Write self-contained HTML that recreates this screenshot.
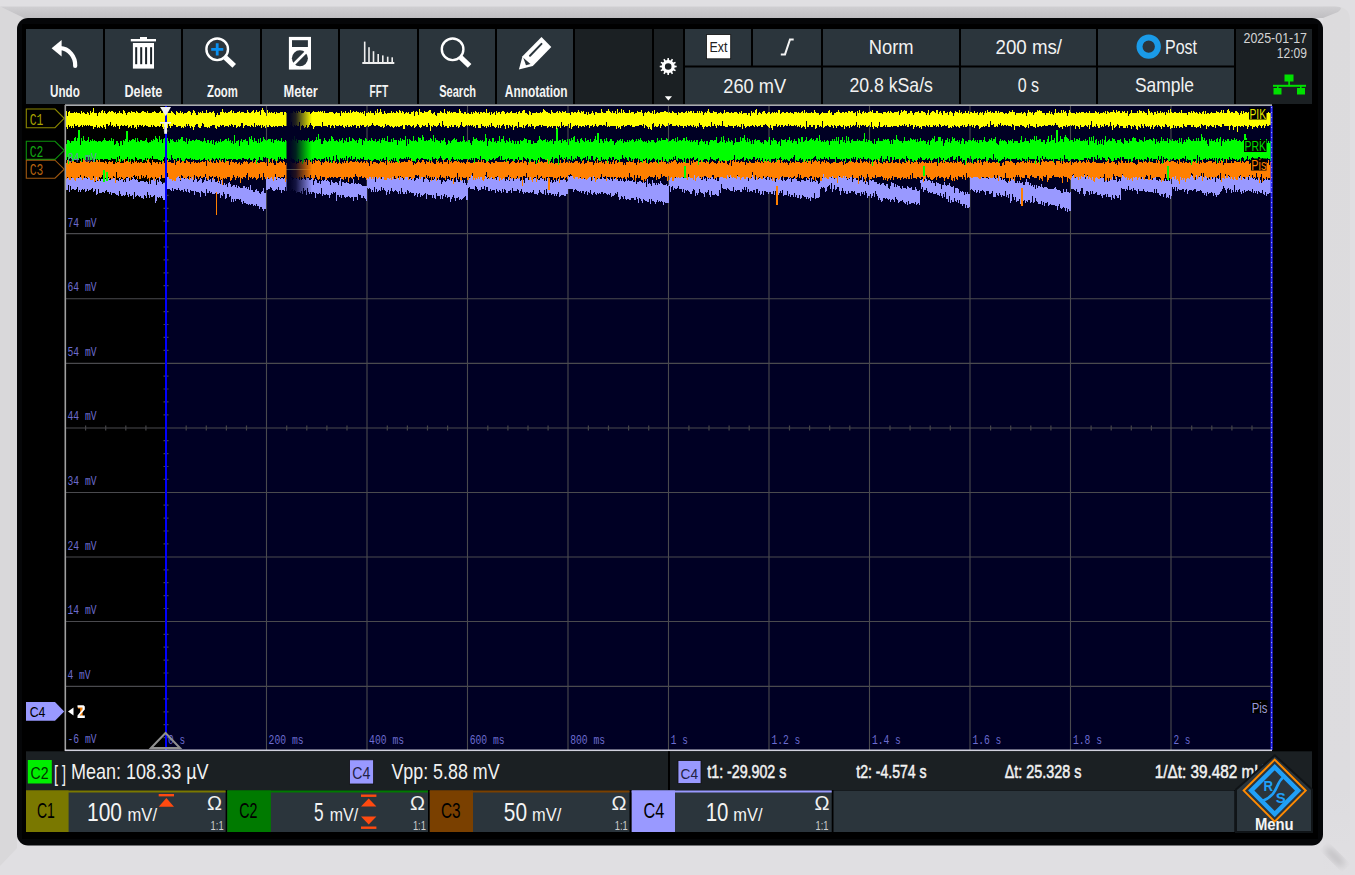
<!DOCTYPE html>
<html><head><meta charset="utf-8"><title>Oscilloscope</title>
<style>html,body{margin:0;padding:0;width:1355px;height:875px;overflow:hidden;background:#e2e1e3;font-family:"Liberation Sans",sans-serif}svg{display:block}</style>
</head><body>
<svg width="1355" height="875" viewBox="0 0 1355 875" >
<defs><linearGradient id="gTop" x1="0" y1="0" x2="0" y2="1"><stop offset="0" stop-color="#d0cfd2"/><stop offset="1" stop-color="#bfbec1"/></linearGradient><linearGradient id="gFade" x1="0" y1="0" x2="1" y2="0"><stop offset="0" stop-color="#000010" stop-opacity="1"/><stop offset="0.35" stop-color="#000010" stop-opacity="0.75"/><stop offset="1" stop-color="#000010" stop-opacity="0"/></linearGradient><radialGradient id="gBR" cx="0.5" cy="0.5" r="0.5"><stop offset="0" stop-color="#c4c3c5"/><stop offset="1" stop-color="#e2e1e3" stop-opacity="0"/></radialGradient></defs>
<rect x="0" y="0" width="1355" height="875" fill="#e0dfe2"/>
<path d="M0,6.5 L24,18 H30 V30 H17 V848 L0,866 Z" fill="#d9d8da"/>
<defs><linearGradient id="gR" x1="0" y1="0" x2="1" y2="0"><stop offset="0" stop-color="#d9d8da"/><stop offset="1" stop-color="#e2e1e3"/></linearGradient><filter id="blur3"><feGaussianBlur stdDeviation="3"/></filter></defs><linearGradient id="gRV" x1="0" y1="0" x2="0" y2="1"><stop offset="0" stop-color="#dcdbdd"/><stop offset="0.9" stop-color="#dddcdf"/><stop offset="1" stop-color="#e0dfe2"/></linearGradient><path d="M1323,6.5 H1335 Q1350,6.5 1350,20 V875 H1323 Z" fill="url(#gRV)"/>
<path d="M0,6.5 H1335 Q1345,6.5 1338,12 L1323,18 H24 Z" fill="url(#gTop)"/>
<ellipse cx="1335" cy="857" rx="13" ry="4.5" transform="rotate(45 1335 857)" fill="#c4c3c6" filter="url(#blur3)"/>
<rect x="17" y="18" width="1306" height="827.5" rx="11" fill="#050608"/>
<rect x="22" y="24" width="1296" height="815" fill="#000"/>
<rect x="26" y="29" width="77" height="75" fill="#2b353c"/>
<text x="50" y="96.8" font-size="16.3" fill="#f4f4f4" font-weight="bold" font-family='"Liberation Sans", sans-serif' text-anchor="start" textLength="29.8" lengthAdjust="spacingAndGlyphs" >Undo</text>
<rect x="105" y="29" width="76" height="75" fill="#2b353c"/>
<text x="124.5" y="96.8" font-size="16.3" fill="#f4f4f4" font-weight="bold" font-family='"Liberation Sans", sans-serif' text-anchor="start" textLength="37.9" lengthAdjust="spacingAndGlyphs" >Delete</text>
<rect x="183" y="29" width="77" height="75" fill="#2b353c"/>
<text x="207" y="96.8" font-size="16.3" fill="#f4f4f4" font-weight="bold" font-family='"Liberation Sans", sans-serif' text-anchor="start" textLength="30.8" lengthAdjust="spacingAndGlyphs" >Zoom</text>
<rect x="262" y="29" width="76" height="75" fill="#2b353c"/>
<text x="283.5" y="96.8" font-size="16.3" fill="#f4f4f4" font-weight="bold" font-family='"Liberation Sans", sans-serif' text-anchor="start" textLength="34.3" lengthAdjust="spacingAndGlyphs" >Meter</text>
<rect x="340" y="29" width="77" height="75" fill="#2b353c"/>
<text x="369.6" y="96.8" font-size="16.3" fill="#f4f4f4" font-weight="bold" font-family='"Liberation Sans", sans-serif' text-anchor="start" textLength="18.6" lengthAdjust="spacingAndGlyphs" >FFT</text>
<rect x="419" y="29" width="76" height="75" fill="#2b353c"/>
<text x="439.2" y="96.8" font-size="16.3" fill="#f4f4f4" font-weight="bold" font-family='"Liberation Sans", sans-serif' text-anchor="start" textLength="36.9" lengthAdjust="spacingAndGlyphs" >Search</text>
<rect x="497" y="29" width="76" height="75" fill="#2b353c"/>
<text x="504.8" y="96.8" font-size="16.3" fill="#f4f4f4" font-weight="bold" font-family='"Liberation Sans", sans-serif' text-anchor="start" textLength="62.8" lengthAdjust="spacingAndGlyphs" >Annotation</text>
<rect x="575" y="29" width="77" height="75" fill="#1b2023"/>
<rect x="654" y="29" width="29" height="75" fill="#1b2023"/>
<rect x="685" y="29" width="66" height="36.5" fill="#2b353c"/>
<rect x="753" y="29" width="68" height="36.5" fill="#2b353c"/>
<rect x="685" y="67.5" width="136" height="36.5" fill="#2b353c"/>
<rect x="823" y="29" width="136" height="36.5" fill="#2b353c"/>
<rect x="823" y="67.5" width="136" height="36.5" fill="#2b353c"/>
<rect x="961" y="29" width="135" height="36.5" fill="#2b353c"/>
<rect x="961" y="67.5" width="135" height="36.5" fill="#2b353c"/>
<rect x="1098" y="29" width="136" height="36.5" fill="#2b353c"/>
<rect x="1098" y="67.5" width="136" height="36.5" fill="#2b353c"/>
<rect x="1236" y="29" width="76" height="75" fill="#1b2023"/>
<text x="868.7" y="54.3" font-size="21" fill="#f2f2f2" font-weight="normal" font-family='"Liberation Sans", sans-serif' text-anchor="start" textLength="44.9" lengthAdjust="spacingAndGlyphs" >Norm</text>
<text x="995.5" y="54.3" font-size="21" fill="#f2f2f2" font-weight="normal" font-family='"Liberation Sans", sans-serif' text-anchor="start" textLength="66.5" lengthAdjust="spacingAndGlyphs" >200 ms/</text>
<text x="849.4" y="92" font-size="21" fill="#f2f2f2" font-weight="normal" font-family='"Liberation Sans", sans-serif' text-anchor="start" textLength="83.5" lengthAdjust="spacingAndGlyphs" >20.8 kSa/s</text>
<text x="1017.7" y="92" font-size="21" fill="#f2f2f2" font-weight="normal" font-family='"Liberation Sans", sans-serif' text-anchor="start" textLength="21.4" lengthAdjust="spacingAndGlyphs" >0 s</text>
<text x="723.3" y="92.5" font-size="21" fill="#f2f2f2" font-weight="normal" font-family='"Liberation Sans", sans-serif' text-anchor="start" textLength="62.8" lengthAdjust="spacingAndGlyphs" >260 mV</text>
<text x="1165" y="54" font-size="21" fill="#f2f2f2" font-weight="normal" font-family='"Liberation Sans", sans-serif' text-anchor="start" textLength="32" lengthAdjust="spacingAndGlyphs" >Post</text>
<text x="1135" y="92" font-size="21" fill="#f2f2f2" font-weight="normal" font-family='"Liberation Sans", sans-serif' text-anchor="start" textLength="59" lengthAdjust="spacingAndGlyphs" >Sample</text>
<text x="1307" y="43.3" font-size="14.5" fill="#d4d4d4" font-weight="normal" font-family='"Liberation Sans", sans-serif' text-anchor="end" textLength="63.5" lengthAdjust="spacingAndGlyphs" >2025-01-17</text>
<text x="1307" y="57.9" font-size="14.5" fill="#d4d4d4" font-weight="normal" font-family='"Liberation Sans", sans-serif' text-anchor="end" textLength="30.2" lengthAdjust="spacingAndGlyphs" >12:09</text>
<rect x="706.5" y="34.6" width="24.2" height="24.2" fill="#fff" stroke="#111" stroke-width="0.8"/>
<text x="709.5" y="52.1" font-size="15" fill="#222" font-weight="normal" font-family='"Liberation Sans", sans-serif' text-anchor="start" textLength="18" lengthAdjust="spacingAndGlyphs" >Ext</text>
<path d="M780.8,54.4 H785 L790,39.5 H793.7" fill="none" stroke="#f4f4f4" stroke-width="2"/>
<circle cx="1148.7" cy="46.6" r="9.2" fill="none" stroke="#1a9be8" stroke-width="6"/>
<g fill="#00e000"><rect x="1284.5" y="74.5" width="9" height="7"/><rect x="1288.3" y="81" width="1.6" height="5"/><rect x="1273" y="84.8" width="33" height="2"/><rect x="1277" y="86" width="1.6" height="3"/><rect x="1300" y="86" width="1.6" height="3"/><rect x="1273.5" y="88" width="8" height="6.5"/><rect x="1297" y="88" width="8" height="6.5"/></g>
<path d="M666.52,60.22 L667.28,60.06 L667.49,58.03 L668.91,58.03 L669.12,60.06 L669.88,60.22 L670.62,60.47 L671.82,58.81 L673.05,59.52 L672.21,61.38 L672.80,61.90 L673.32,62.49 L675.18,61.65 L675.89,62.88 L674.23,64.08 L674.48,64.82 L674.64,65.58 L676.67,65.79 L676.67,67.21 L674.64,67.42 L674.48,68.18 L674.23,68.92 L675.89,70.12 L675.18,71.35 L673.32,70.51 L672.80,71.10 L672.21,71.62 L673.05,73.48 L671.82,74.19 L670.62,72.53 L669.88,72.78 L669.12,72.94 L668.91,74.97 L667.49,74.97 L667.28,72.94 L666.52,72.78 L665.78,72.53 L664.58,74.19 L663.35,73.48 L664.19,71.62 L663.60,71.10 L663.08,70.51 L661.22,71.35 L660.51,70.12 L662.17,68.92 L661.92,68.18 L661.76,67.42 L659.73,67.21 L659.73,65.79 L661.76,65.58 L661.92,64.82 L662.17,64.08 L660.51,62.88 L661.22,61.65 L663.08,62.49 L663.60,61.90 L664.19,61.38 L663.35,59.52 L664.58,58.81 L665.78,60.47 Z M671.5,66.5 A3.3,3.3 0 1,0 664.9000000000001,66.5 A3.3,3.3 0 1,0 671.5,66.5 Z" fill="#fff" fill-rule="evenodd"/>
<path d="M664.8,96.2 H672 L668.4,100.6 Z" fill="#fff"/>
<g fill="#fff"><path d="M51.6,48.3 L61.6,40 V56.4 Z"/></g>
<path d="M60,48.2 A15.5,17 0 0 1 75.2,66" fill="none" stroke="#fff" stroke-width="4.2" stroke-linecap="round"/>
<g fill="#fff"><rect x="130.8" y="39" width="25.2" height="2.4"/><rect x="140" y="37" width="7" height="2.5"/><rect x="132.9" y="43" width="21.1" height="25.6"/></g>
<g fill="#1b2329"><rect x="135.2" y="47.2" width="2" height="17"/><rect x="140.2" y="47.2" width="2" height="17"/><rect x="145.1" y="47.2" width="2" height="17"/><rect x="150.1" y="47.2" width="2" height="17"/></g>
<circle cx="217.2" cy="49.3" r="10.8" fill="none" stroke="#fff" stroke-width="2.4"/><path d="M225.2,57.3 L234.2,65.8" stroke="#fff" stroke-width="5.2"/>
<path d="M211.2,49.3 H223.3 M217.2,43.2 V55.4" stroke="#0a90f0" stroke-width="2.8"/>
<circle cx="452.6" cy="49.3" r="10.8" fill="none" stroke="#fff" stroke-width="2.4"/><path d="M460.6,57.3 L469.6,65.8" stroke="#fff" stroke-width="5.2"/>
<rect x="288.9" y="36.9" width="22.1" height="32.7" fill="#fff"/><rect x="292" y="40.2" width="15.9" height="6.8" fill="#2b353c"/><circle cx="299.9" cy="58.3" r="8" fill="#2b353c"/><path d="M292.5,65.5 L307.5,50.5" stroke="#fff" stroke-width="2.6"/>
<g fill="#eee"><rect x="363.9" y="41.6" width="1.6" height="21.4"/><rect x="368.2" y="47.2" width="1.6" height="15.799999999999997"/><rect x="372.7" y="51.2" width="1.6" height="11.799999999999997"/><rect x="377.4" y="54" width="1.6" height="9"/><rect x="382.0" y="55.4" width="1.6" height="7.600000000000001"/><rect x="386.9" y="56.7" width="1.6" height="6.299999999999997"/><rect x="391.4" y="57.3" width="1.6" height="5.700000000000003"/><rect x="362.3" y="62" width="32" height="2"/></g>
<path d="M518.9,69.6 L522.5,56.2 L541.5,36.9 L551.3,47 L532.8,66 Z" fill="#fff"/><path d="M530,55.7 L541.5,43.9" stroke="#2b353c" stroke-width="2" stroke-linecap="round"/><path d="M523.2,57.7 L530.5,64 L526,65.3 Z" fill="#2b353c"/>
<rect x="65" y="105" width="1206.5" height="645.5" fill="#000024"/>
<rect x="65" y="105" width="101" height="645.5" fill="#000000"/>
<path d="M66,169.5 H1271 M66,233.6 H1271 M66,298.8 H1271 M66,363.4 H1271 M66,428.0 H1271 M66,492.5 H1271 M66,557.0 H1271 M66,621.5 H1271 M66,686.4 H1271 M166.0,106 V750 M266.5,106 V750 M367.0,106 V750 M467.5,106 V750 M568.0,106 V750 M668.5,106 V750 M769.0,106 V750 M869.5,106 V750 M970.0,106 V750 M1070.5,106 V750 M1171.0,106 V750" stroke="#4a4a4e" stroke-width="1.1" fill="none"/>
<path d="M85.6,425.5 V430.5 M105.7,425.5 V430.5 M125.8,425.5 V430.5 M145.9,425.5 V430.5 M186.2,425.5 V430.5 M206.3,425.5 V430.5 M226.4,425.5 V430.5 M246.5,425.5 V430.5 M286.7,425.5 V430.5 M306.8,425.5 V430.5 M326.9,425.5 V430.5 M347.0,425.5 V430.5 M387.3,425.5 V430.5 M407.4,425.5 V430.5 M427.5,425.5 V430.5 M447.6,425.5 V430.5 M487.8,425.5 V430.5 M507.9,425.5 V430.5 M528.0,425.5 V430.5 M548.1,425.5 V430.5 M588.4,425.5 V430.5 M608.5,425.5 V430.5 M628.6,425.5 V430.5 M648.7,425.5 V430.5 M688.9,425.5 V430.5 M709.0,425.5 V430.5 M729.1,425.5 V430.5 M749.2,425.5 V430.5 M789.5,425.5 V430.5 M809.6,425.5 V430.5 M829.7,425.5 V430.5 M849.8,425.5 V430.5 M890.0,425.5 V430.5 M910.1,425.5 V430.5 M930.2,425.5 V430.5 M950.3,425.5 V430.5 M990.6,425.5 V430.5 M1010.7,425.5 V430.5 M1030.8,425.5 V430.5 M1050.9,425.5 V430.5 M1091.1,425.5 V430.5 M1111.2,425.5 V430.5 M1131.3,425.5 V430.5 M1151.4,425.5 V430.5 M1191.7,425.5 V430.5 M1211.8,425.5 V430.5 M1231.9,425.5 V430.5 M1252.0,425.5 V430.5 M163.5,117.9 H168.5 M163.5,130.8 H168.5 M163.5,143.7 H168.5 M163.5,156.6 H168.5 M163.5,182.5 H168.5 M163.5,195.4 H168.5 M163.5,208.3 H168.5 M163.5,221.2 H168.5 M163.5,247.0 H168.5 M163.5,259.9 H168.5 M163.5,272.8 H168.5 M163.5,285.7 H168.5 M163.5,311.6 H168.5 M163.5,324.5 H168.5 M163.5,337.4 H168.5 M163.5,350.3 H168.5 M163.5,376.1 H168.5 M163.5,389.0 H168.5 M163.5,401.9 H168.5 M163.5,414.8 H168.5 M163.5,440.7 H168.5 M163.5,453.6 H168.5 M163.5,466.5 H168.5 M163.5,479.4 H168.5 M163.5,505.2 H168.5 M163.5,518.1 H168.5 M163.5,531.0 H168.5 M163.5,543.9 H168.5 M163.5,569.8 H168.5 M163.5,582.7 H168.5 M163.5,595.6 H168.5 M163.5,608.5 H168.5 M163.5,634.3 H168.5 M163.5,647.2 H168.5 M163.5,660.1 H168.5 M163.5,673.0 H168.5 M163.5,698.9 H168.5 M163.5,711.8 H168.5 M163.5,724.7 H168.5 M163.5,737.6 H168.5" stroke="#444448" stroke-width="1.2" fill="none"/>
<text x="67.5" y="226.8" font-size="13.5" fill="#6c6cd0" font-weight="normal" font-family='"Liberation Mono", monospace' text-anchor="start" textLength="29" lengthAdjust="spacingAndGlyphs" >74 mV</text>
<text x="67.5" y="291.3" font-size="13.5" fill="#6c6cd0" font-weight="normal" font-family='"Liberation Mono", monospace' text-anchor="start" textLength="29" lengthAdjust="spacingAndGlyphs" >64 mV</text>
<text x="67.5" y="355.9" font-size="13.5" fill="#6c6cd0" font-weight="normal" font-family='"Liberation Mono", monospace' text-anchor="start" textLength="29" lengthAdjust="spacingAndGlyphs" >54 mV</text>
<text x="67.5" y="420.4" font-size="13.5" fill="#6c6cd0" font-weight="normal" font-family='"Liberation Mono", monospace' text-anchor="start" textLength="29" lengthAdjust="spacingAndGlyphs" >44 mV</text>
<text x="67.5" y="485.0" font-size="13.5" fill="#6c6cd0" font-weight="normal" font-family='"Liberation Mono", monospace' text-anchor="start" textLength="29" lengthAdjust="spacingAndGlyphs" >34 mV</text>
<text x="67.5" y="549.5" font-size="13.5" fill="#6c6cd0" font-weight="normal" font-family='"Liberation Mono", monospace' text-anchor="start" textLength="29" lengthAdjust="spacingAndGlyphs" >24 mV</text>
<text x="67.5" y="614.1" font-size="13.5" fill="#6c6cd0" font-weight="normal" font-family='"Liberation Mono", monospace' text-anchor="start" textLength="29" lengthAdjust="spacingAndGlyphs" >14 mV</text>
<text x="67.5" y="678.6" font-size="13.5" fill="#6c6cd0" font-weight="normal" font-family='"Liberation Mono", monospace' text-anchor="start" textLength="23" lengthAdjust="spacingAndGlyphs" >4 mV</text>
<text x="67.5" y="743.2" font-size="13.5" fill="#6c6cd0" font-weight="normal" font-family='"Liberation Mono", monospace' text-anchor="start" textLength="29" lengthAdjust="spacingAndGlyphs" >-6 mV</text>
<text x="168.1" y="743.5" font-size="13.5" fill="#6c6cd0" font-weight="normal" font-family='"Liberation Mono", monospace' text-anchor="start" textLength="17" lengthAdjust="spacingAndGlyphs" >0 s</text>
<text x="268.6" y="743.5" font-size="13.5" fill="#6c6cd0" font-weight="normal" font-family='"Liberation Mono", monospace' text-anchor="start" textLength="35" lengthAdjust="spacingAndGlyphs" >200 ms</text>
<text x="369.1" y="743.5" font-size="13.5" fill="#6c6cd0" font-weight="normal" font-family='"Liberation Mono", monospace' text-anchor="start" textLength="35" lengthAdjust="spacingAndGlyphs" >400 ms</text>
<text x="469.7" y="743.5" font-size="13.5" fill="#6c6cd0" font-weight="normal" font-family='"Liberation Mono", monospace' text-anchor="start" textLength="35" lengthAdjust="spacingAndGlyphs" >600 ms</text>
<text x="570.2" y="743.5" font-size="13.5" fill="#6c6cd0" font-weight="normal" font-family='"Liberation Mono", monospace' text-anchor="start" textLength="35" lengthAdjust="spacingAndGlyphs" >800 ms</text>
<text x="670.8" y="743.5" font-size="13.5" fill="#6c6cd0" font-weight="normal" font-family='"Liberation Mono", monospace' text-anchor="start" textLength="17" lengthAdjust="spacingAndGlyphs" >1 s</text>
<text x="771.4" y="743.5" font-size="13.5" fill="#6c6cd0" font-weight="normal" font-family='"Liberation Mono", monospace' text-anchor="start" textLength="29" lengthAdjust="spacingAndGlyphs" >1.2 s</text>
<text x="871.9" y="743.5" font-size="13.5" fill="#6c6cd0" font-weight="normal" font-family='"Liberation Mono", monospace' text-anchor="start" textLength="29" lengthAdjust="spacingAndGlyphs" >1.4 s</text>
<text x="972.4" y="743.5" font-size="13.5" fill="#6c6cd0" font-weight="normal" font-family='"Liberation Mono", monospace' text-anchor="start" textLength="29" lengthAdjust="spacingAndGlyphs" >1.6 s</text>
<text x="1073.0" y="743.5" font-size="13.5" fill="#6c6cd0" font-weight="normal" font-family='"Liberation Mono", monospace' text-anchor="start" textLength="29" lengthAdjust="spacingAndGlyphs" >1.8 s</text>
<text x="1173.5" y="743.5" font-size="13.5" fill="#6c6cd0" font-weight="normal" font-family='"Liberation Mono", monospace' text-anchor="start" textLength="17" lengthAdjust="spacingAndGlyphs" >2 s</text>
<defs><linearGradient id="gMask" x1="0" y1="0" x2="1" y2="0"><stop offset="0" stop-color="#000"/><stop offset="0.3" stop-color="#222"/><stop offset="1" stop-color="#fff"/></linearGradient><mask id="mFade" maskUnits="userSpaceOnUse" x="0" y="0" width="1355" height="875"><rect x="0" y="0" width="1355" height="875" fill="#fff"/><rect x="286.5" y="100" width="2.5" height="130" fill="#000"/><rect x="289" y="100" width="23" height="130" fill="url(#gMask)"/></mask></defs>
<g mask="url(#mFade)" shape-rendering="crispEdges">
<path d="M66,177h1V178h1h1V175h1V178h1h1V175h1V178h1V176h1V177h1h1h1V178h1V177h1h1h1V179h1V177h1V178h1V177h1V178h1V179h1V177h1h1V179h1h1h1V178h1h1V182h1V177h1V181h1V180h1V179h1V181h1V179h1h1V181h1V177h1V179h1V178h1V180h1V178h1V180h1h1V179h1V177h1V178h1h1V180h1h1h1V181h1V178h1V180h1V179h1h1V182h1V180h1V182h1V178h1h1V176h1V181h1V180h1h1V179h1V177h1V179h1V180h1V179h1V180h1V182h1h1V181h1h1h1h1V182h1h1V181h1V182h1V184h1V180h1V184h1V180h1h1V177h1V181h1V179h1V185h1V180h1V182h1V177h1V181h1V182h1V184h1V183h1h1V182h1V199h-1V200h-1h-1V198h-1V196h-1V198h-1V197h-1V198h-1V197h-1V201h-1V203h-1V195h-1V196h-1V197h-1h-1V195h-1V198h-1V195h-1V192h-1V198h-1V196h-1V195h-1V199h-1V198h-1h-1V196h-1V197h-1V196h-1V195h-1V196h-1V197h-1V192h-1V199h-1V195h-1V196h-1h-1V194h-1V197h-1V195h-1V192h-1V195h-1V196h-1V195h-1V196h-1h-1V194h-1V191h-1V196h-1V195h-1h-1V194h-1V193h-1h-1h-1V195h-1V192h-1V194h-1V192h-1h-1V190h-1V191h-1V193h-1V192h-1h-1V193h-1h-1h-1V189h-1V194h-1V195h-1V189h-1V191h-1V192h-1V188h-1V189h-1V190h-1h-1V191h-1V189h-1V191h-1V192h-1V189h-1V190h-1V189h-1V190h-1V192h-1V190h-1V192h-1V187h-1V189h-1V190h-1h-1V189h-1h-1V190h-1V186h-1V192h-1V185h-1V190h-1h-1ZM166,176h1V177h1h1V176h1V177h1V179h1V178h1V176h1V175h1V180h1V175h1h1V176h1V178h1V181h1V178h1h1h1V179h1V178h1V177h1V178h1V179h1h1V178h1V176h1V177h1V182h1V180h1V177h1V179h1V182h1V181h1V180h1V178h1V179h1V183h1V182h1V180h1V177h1V181h1h1V179h1V180h1V179h1V182h1V178h1V179h1h1V182h1h1V181h1V183h1V181h1V184h1V180h1V181h1V185h1V183h1V185h1V184h1V187h1V183h1V182h1V184h1V187h1V186h1V185h1h1V187h1V185h1V188h1V186h1V187h1V188h1h1h1V186h1h1V188h1V187h1V189h1V187h1V190h1V185h1V190h1h1V192h1h1V190h1V189h1V191h1h1V193h1V194h1V192h1V191h1V188h1V193h1h1V209h-1h-1V211h-1V209h-1V207h-1h-1V209h-1V206h-1h-1V204h-1V206h-1V205h-1V206h-1V204h-1h-1V205h-1V204h-1V205h-1V204h-1h-1V203h-1h-1V201h-1V204h-1V202h-1V199h-1V200h-1V199h-1h-1h-1V201h-1V199h-1V202h-1V199h-1V202h-1V196h-1V197h-1V194h-1h-1V198h-1V199h-1V194h-1V192h-1V196h-1V195h-1V198h-1V193h-1V194h-1h-1V196h-1V193h-1V194h-1h-1h-1V192h-1V193h-1V191h-1V193h-1h-1V189h-1V196h-1V193h-1h-1V192h-1V191h-1V197h-1V193h-1V192h-1h-1h-1V191h-1V195h-1V191h-1h-1h-1V190h-1V193h-1V192h-1V189h-1V192h-1V191h-1V189h-1V192h-1V190h-1h-1V191h-1V190h-1V188h-1V190h-1h-1V189h-1h-1V191h-1V188h-1V191h-1V190h-1V189h-1h-1h-1h-1ZM266,178h1V176h1V179h1V176h1h1h1V177h1h1h1h1V180h1V176h1V178h1h1V179h1V178h1h1V179h1V178h1V175h1V178h1V179h1V177h1V179h1V177h1V178h1V180h1V179h1V178h1V176h1V179h1V176h1V178h1V180h1V177h1V180h1V179h1V177h1V179h1V180h1V178h1h1h1V180h1h1V179h1V178h1V185h1V181h1V179h1V180h1V183h1h1V181h1V184h1V181h1V180h1V181h1V180h1V179h1V181h1V180h1V181h1V182h1V185h1V180h1V182h1V183h1h1V182h1h1V183h1V185h1V181h1V178h1V186h1V182h1h1V183h1h1V182h1V183h1h1V184h1h1V183h1h1V179h1V184h1V183h1V184h1h1V183h1V184h1h1V185h1V186h1h1h1h1h1V201h-1V199h-1V198h-1V196h-1V198h-1h-1V195h-1h-1V194h-1V200h-1V197h-1h-1h-1V201h-1V197h-1h-1V198h-1V197h-1V196h-1V197h-1h-1V198h-1V197h-1V195h-1h-1V198h-1V195h-1V197h-1V195h-1h-1V201h-1V192h-1V193h-1V192h-1V194h-1V193h-1V195h-1V198h-1V195h-1h-1V194h-1V195h-1h-1V194h-1V196h-1V188h-1V194h-1V193h-1V194h-1h-1V193h-1V198h-1V193h-1V192h-1h-1V194h-1V192h-1V194h-1V192h-1V188h-1V195h-1V190h-1V191h-1V188h-1V194h-1V191h-1V193h-1V192h-1h-1h-1V193h-1V191h-1V190h-1V191h-1V189h-1V190h-1V191h-1V193h-1V190h-1V191h-1h-1V187h-1V191h-1V190h-1h-1V193h-1V190h-1h-1V187h-1V190h-1V189h-1V190h-1V191h-1h-1V190h-1V188h-1V187h-1V189h-1h-1V190h-1h-1ZM367,175h1V176h1h1h1h1h1h1V175h1V182h1V177h1V178h1V176h1V175h1V177h1V179h1V175h1V174h1V177h1V175h1V177h1V176h1V178h1h1V177h1h1V175h1V176h1V179h1h1V177h1h1V178h1V177h1h1V176h1V178h1V180h1V175h1V177h1h1h1V179h1h1V178h1V180h1V179h1V178h1V181h1V180h1V178h1h1V179h1V174h1V177h1h1V175h1V182h1V179h1h1V178h1V179h1V180h1V182h1V180h1V178h1V180h1h1V179h1V177h1V180h1h1V178h1V180h1h1V184h1V182h1V180h1V181h1V182h1V181h1V179h1h1V180h1V179h1V181h1V179h1V181h1V182h1h1V178h1V180h1V182h1h1V180h1h1h1V183h1V180h1V183h1V185h1V183h1V200h-1h-1V196h-1V197h-1V198h-1V199h-1V200h-1V199h-1V200h-1V197h-1V198h-1h-1V201h-1V198h-1V195h-1V197h-1V199h-1V202h-1V197h-1h-1V198h-1V195h-1V197h-1V194h-1V196h-1V199h-1V195h-1V199h-1V196h-1h-1h-1V193h-1V199h-1V198h-1V195h-1V198h-1V195h-1h-1h-1h-1V194h-1V199h-1V193h-1V194h-1V195h-1V196h-1V195h-1V197h-1V193h-1V194h-1V197h-1V193h-1V195h-1V196h-1V193h-1h-1h-1V192h-1V193h-1V191h-1V190h-1V194h-1V192h-1V194h-1h-1V192h-1V188h-1V194h-1V191h-1V194h-1V192h-1V191h-1V190h-1V191h-1V192h-1V191h-1V188h-1V191h-1V194h-1V190h-1V192h-1V195h-1V191h-1V190h-1V188h-1V190h-1V187h-1V191h-1V190h-1V191h-1V192h-1V189h-1V192h-1V187h-1V192h-1V190h-1V192h-1V189h-1V188h-1V189h-1V188h-1ZM468,174h1V178h1V177h1V175h1V176h1h1h1V177h1V175h1V176h1h1V178h1V177h1V176h1V178h1h1V177h1V176h1V177h1V179h1V178h1V176h1h1V177h1V179h1V178h1V177h1V178h1V180h1V177h1V176h1V178h1h1h1h1h1V173h1V181h1V179h1V180h1V177h1V181h1V178h1V176h1V178h1V181h1V177h1V178h1V179h1V178h1h1V176h1V181h1V180h1V175h1V180h1V183h1V178h1h1V177h1V180h1V178h1V177h1V179h1h1h1V178h1h1h1V179h1V180h1h1V178h1h1V179h1V178h1V181h1V180h1V181h1V178h1V180h1h1V182h1V180h1V183h1V182h1V180h1V182h1V180h1V181h1V179h1V180h1h1h1h1V179h1V180h1h1V182h1V181h1V194h-1h-1V196h-1h-1V195h-1h-1h-1V196h-1V197h-1V192h-1V194h-1V196h-1V194h-1V196h-1V194h-1h-1V195h-1V193h-1h-1V195h-1V193h-1V189h-1V195h-1V190h-1V194h-1h-1V193h-1V192h-1V190h-1V193h-1V195h-1V194h-1h-1h-1V190h-1V192h-1V193h-1V192h-1V193h-1h-1V192h-1h-1V193h-1V192h-1V194h-1V192h-1V189h-1V191h-1V193h-1V190h-1V189h-1V191h-1h-1h-1h-1V188h-1V193h-1V190h-1V191h-1h-1V193h-1h-1V190h-1V189h-1V192h-1V189h-1V193h-1V191h-1V190h-1V192h-1V191h-1V189h-1V193h-1V190h-1h-1h-1V191h-1V189h-1V191h-1h-1V187h-1h-1V190h-1V186h-1V189h-1h-1V187h-1V190h-1h-1V191h-1V189h-1V187h-1V186h-1V190h-1V189h-1h-1h-1h-1V187h-1V188h-1ZM568,176h1V177h1V176h1h1h1h1h1V175h1V176h1V175h1V174h1V178h1h1V176h1V178h1V177h1V179h1V176h1V175h1V176h1V177h1V174h1V176h1V181h1V178h1V176h1V178h1h1h1V179h1V178h1h1V179h1h1V176h1V178h1V179h1h1V176h1V178h1V179h1V180h1V178h1V179h1V181h1V178h1V179h1V178h1V180h1V179h1V181h1h1V179h1V181h1V179h1V181h1V182h1V181h1V179h1V181h1V180h1V181h1h1h1V180h1V182h1h1V181h1V184h1V182h1h1V181h1h1V182h1V183h1V182h1V183h1V182h1V187h1V179h1V184h1V183h1V184h1V186h1V180h1V183h1h1V185h1V183h1V185h1V183h1V184h1V181h1V183h1V184h1V185h1h1h1V184h1V186h1V185h1V203h-1h-1h-1h-1V202h-1V205h-1V202h-1V201h-1V202h-1V201h-1V202h-1V200h-1V202h-1V204h-1V202h-1V201h-1h-1V199h-1V204h-1V199h-1V202h-1h-1V201h-1h-1V200h-1V199h-1V203h-1V201h-1V199h-1V198h-1V203h-1V199h-1V197h-1V200h-1h-1V198h-1h-1h-1V200h-1h-1V199h-1h-1V200h-1V199h-1V196h-1V199h-1V197h-1V196h-1V199h-1V200h-1V197h-1V192h-1V194h-1V193h-1V195h-1V196h-1h-1V197h-1V193h-1V195h-1V194h-1V195h-1V194h-1V193h-1h-1V194h-1V192h-1h-1V194h-1V193h-1V194h-1V193h-1V195h-1V194h-1V192h-1V193h-1V195h-1V194h-1V190h-1V193h-1V192h-1V195h-1V191h-1V192h-1V194h-1V191h-1h-1V193h-1V191h-1V192h-1V191h-1h-1V190h-1V189h-1V190h-1V192h-1V189h-1h-1h-1h-1h-1ZM669,179h1V175h1V177h1V175h1V176h1V177h1V178h1V175h1V176h1V175h1V176h1V175h1V177h1V176h1V178h1V177h1V178h1h1V176h1V177h1V175h1V176h1V177h1V176h1V177h1V175h1V178h1V177h1h1V176h1h1V178h1V180h1h1V176h1V179h1V178h1V181h1V176h1V179h1V178h1V179h1V177h1h1V179h1h1V180h1V177h1V181h1h1V196h-1h-1V195h-1V194h-1V195h-1h-1h-1V191h-1V197h-1V195h-1V190h-1V192h-1V193h-1V192h-1V197h-1V194h-1V193h-1h-1V192h-1V189h-1V193h-1V195h-1V193h-1V196h-1V190h-1V189h-1V191h-1V194h-1h-1V192h-1V191h-1V190h-1V191h-1V190h-1V193h-1V189h-1V192h-1V189h-1h-1h-1V186h-1V188h-1V189h-1h-1V188h-1V190h-1V186h-1V187h-1V192h-1V186h-1ZM719,176h1V172h1V175h1V176h1h1h1h1V174h1V173h1V175h1V178h1V175h1V174h1h1V177h1V176h1V177h1h1V176h1V174h1V176h1V175h1h1V173h1V176h1V175h1V179h1V176h1V177h1V181h1V176h1V177h1V178h1V175h1V176h1V178h1V180h1V174h1V176h1V179h1V178h1V177h1V178h1V176h1V178h1V177h1V179h1V180h1V177h1V176h1V180h1V178h1V179h1h1V178h1V179h1V182h1V179h1V178h1V179h1V178h1V175h1V180h1V181h1V178h1V180h1V181h1V180h1V179h1V177h1V179h1V178h1V182h1V179h1h1V178h1V179h1h1V181h1h1h1V182h1V180h1h1h1V181h1h1V178h1V180h1h1V178h1V182h1V178h1V182h1V181h1h1V182h1V180h1V181h1V184h1V183h1V197h-1V198h-1h-1h-1V199h-1V193h-1V198h-1h-1V197h-1V201h-1V198h-1V199h-1V197h-1V199h-1V197h-1h-1V196h-1V195h-1V198h-1V199h-1V195h-1V198h-1h-1V195h-1V197h-1V193h-1V197h-1V195h-1h-1V197h-1V194h-1V196h-1V191h-1V195h-1h-1h-1V196h-1V190h-1V193h-1V191h-1V193h-1V195h-1V190h-1V194h-1V191h-1V195h-1V191h-1V194h-1h-1V192h-1h-1V194h-1V192h-1h-1V191h-1h-1V195h-1V191h-1V194h-1V195h-1V191h-1V193h-1V189h-1h-1V193h-1V190h-1h-1V192h-1V191h-1h-1V192h-1V189h-1V192h-1V187h-1V190h-1V187h-1V190h-1V189h-1V192h-1h-1V190h-1h-1h-1V191h-1V190h-1V192h-1V187h-1V191h-1h-1h-1V190h-1V189h-1V188h-1V190h-1V189h-1h-1h-1V188h-1V184h-1V193h-1V190h-1ZM820,174h1V175h1V178h1V172h1V176h1V172h1V176h1V171h1V176h1h1h1V178h1V175h1V176h1V179h1V178h1V177h1V176h1h1V177h1h1h1V178h1V174h1V172h1V176h1V178h1V180h1V177h1V179h1V176h1V177h1V182h1V179h1V177h1V178h1V180h1h1V176h1V181h1V180h1h1V176h1V182h1V181h1V184h1V181h1V182h1V185h1V180h1h1V181h1V180h1h1V182h1h1h1V184h1h1V183h1V185h1V184h1V183h1h1V185h1V186h1V184h1h1V188h1V189h1V186h1V182h1V183h1h1V187h1V184h1V187h1V185h1V186h1h1V188h1V189h1V186h1V188h1h1h1V189h1V186h1V187h1V188h1h1V187h1V190h1h1h1V187h1V189h1V191h1h1V190h1V205h-1V203h-1V204h-1V205h-1V202h-1V204h-1V203h-1h-1h-1V204h-1h-1V201h-1V205h-1V202h-1V204h-1V203h-1V202h-1V200h-1V201h-1h-1V202h-1V203h-1V200h-1V199h-1V197h-1V202h-1V200h-1V199h-1V200h-1V202h-1V199h-1V200h-1V199h-1V198h-1V199h-1V198h-1h-1V201h-1V202h-1V200h-1V198h-1V200h-1V196h-1V194h-1V191h-1V197h-1V193h-1V196h-1V198h-1V194h-1V196h-1h-1V198h-1V193h-1V191h-1V195h-1V192h-1V194h-1V192h-1V196h-1V193h-1h-1h-1V195h-1V194h-1V191h-1V192h-1V191h-1h-1V193h-1h-1V191h-1V194h-1h-1V191h-1V193h-1V191h-1V188h-1V191h-1V195h-1V191h-1V187h-1h-1V189h-1V190h-1V185h-1V189h-1V192h-1V183h-1V189h-1V185h-1V186h-1V187h-1V191h-1V192h-1V188h-1V187h-1V188h-1V187h-1V189h-1ZM920,180h1h1V179h1V181h1h1V176h1V179h1V181h1V180h1h1V181h1V183h1V181h1V183h1h1V186h1V182h1V183h1h1V184h1h1V189h1V185h1h1V182h1V185h1V186h1V185h1h1V183h1V186h1V187h1h1V186h1V193h1V188h1h1h1V189h1V193h1V191h1V192h1V191h1V192h1V195h1V192h1V194h1V192h1V194h1h1V207h-1V208h-1h-1V205h-1V208h-1V204h-1h-1V206h-1V204h-1h-1V200h-1V203h-1V200h-1V202h-1V201h-1V198h-1V202h-1h-1V200h-1V203h-1V196h-1V202h-1V199h-1h-1V192h-1V197h-1V194h-1V198h-1V196h-1V193h-1V196h-1V195h-1h-1V193h-1V194h-1h-1h-1V192h-1V193h-1h-1V192h-1V193h-1V191h-1V188h-1V190h-1h-1V192h-1V187h-1V189h-1V183h-1ZM970,175h1h1h1V176h1h1V175h1V176h1V175h1V178h1V177h1V179h1V177h1V178h1h1V176h1V177h1V178h1h1V179h1V176h1h1V175h1V178h1V176h1V178h1V179h1V178h1h1h1V176h1V178h1V180h1V179h1V180h1V179h1V181h1V182h1V183h1V181h1V182h1V181h1V179h1V180h1V179h1h1V183h1h1V181h1V183h1V181h1V183h1h1V182h1V185h1h1V182h1V179h1V182h1h1V185h1V183h1V186h1V185h1V187h1V185h1V189h1V185h1V188h1V186h1h1V187h1V184h1V187h1V188h1V187h1h1h1V188h1V189h1h1h1h1h1h1V188h1V187h1V189h1V190h1h1h1V191h1V193h1h1V189h1V192h1h1V189h1V192h1h1V193h1V192h1V211h-1h-1V209h-1V212h-1V208h-1V211h-1V208h-1V207h-1V208h-1V209h-1V208h-1V204h-1V206h-1V210h-1V206h-1h-1V205h-1h-1h-1h-1V204h-1V205h-1V206h-1V202h-1V203h-1h-1V206h-1V202h-1V205h-1V201h-1V204h-1h-1h-1V202h-1V201h-1V198h-1V202h-1V203h-1V196h-1V202h-1V203h-1V200h-1h-1V202h-1V201h-1V203h-1V200h-1V201h-1V202h-1V199h-1V204h-1V199h-1V201h-1h-1V202h-1V197h-1V200h-1V197h-1V194h-1V201h-1V203h-1V194h-1V198h-1V195h-1V197h-1V191h-1V196h-1h-1V195h-1V197h-1V195h-1V193h-1V196h-1V195h-1V193h-1V197h-1h-1h-1V191h-1V193h-1V194h-1h-1V191h-1h-1h-1V195h-1V192h-1V191h-1V190h-1V191h-1h-1V193h-1V190h-1V192h-1V193h-1V190h-1V192h-1V191h-1V190h-1V189h-1V190h-1ZM1071,175h1V176h1V175h1V176h1V178h1V176h1V175h1V177h1V176h1V174h1h1V176h1h1V175h1V179h1V176h1h1h1V175h1V176h1V178h1V175h1V176h1V179h1V178h1V176h1V178h1V177h1V178h1h1h1h1h1V182h1V180h1V179h1V182h1V178h1V181h1V179h1V180h1V177h1V180h1h1h1V177h1V182h1V181h1V179h1V181h1V200h-1V195h-1V198h-1h-1V196h-1V195h-1V199h-1V198h-1V195h-1V200h-1V197h-1h-1h-1V194h-1V197h-1V194h-1V195h-1h-1V198h-1V196h-1V194h-1V195h-1h-1h-1V192h-1V193h-1V194h-1h-1V191h-1V194h-1V191h-1V195h-1V192h-1V191h-1h-1V194h-1V196h-1V194h-1V188h-1h-1V191h-1V194h-1V192h-1h-1V189h-1V191h-1V190h-1V189h-1h-1h-1ZM1121,174h1V175h1h1h1h1V172h1V177h1V176h1h1V175h1V174h1V176h1V177h1V178h1V175h1h1V176h1h1h1V175h1V179h1V177h1V178h1V177h1V179h1h1h1h1h1h1V180h1h1V178h1h1V176h1V180h1h1V181h1V179h1V180h1V181h1V178h1V181h1h1V179h1V181h1h1V180h1V181h1V177h1V184h1V196h-1V199h-1V195h-1V198h-1V197h-1V198h-1V193h-1V194h-1V197h-1V194h-1h-1V196h-1V195h-1V193h-1h-1V189h-1V193h-1V189h-1V193h-1V192h-1h-1h-1h-1h-1V191h-1V192h-1h-1V191h-1V189h-1V191h-1h-1h-1h-1V189h-1V194h-1V191h-1V190h-1h-1V188h-1V191h-1V189h-1V190h-1h-1V186h-1V190h-1V189h-1V191h-1V189h-1h-1h-1V188h-1ZM1172,173h1V176h1V174h1V176h1h1V178h1V176h1h1h1h1V174h1V175h1V176h1V174h1V176h1V174h1V175h1h1V174h1V175h1V176h1h1V178h1V180h1V174h1V177h1h1h1V176h1h1V177h1h1h1V176h1V177h1V180h1V177h1V179h1V178h1V177h1V179h1V176h1V177h1V182h1V178h1h1V179h1V177h1V180h1V178h1V191h-1V192h-1V194h-1V195h-1h-1V197h-1V195h-1V193h-1V196h-1V193h-1V192h-1V193h-1h-1V194h-1V192h-1V196h-1V193h-1V195h-1V193h-1h-1V191h-1V190h-1V191h-1h-1h-1V192h-1V189h-1h-1V190h-1V191h-1V190h-1h-1h-1V191h-1V194h-1V189h-1V190h-1V192h-1V189h-1h-1V190h-1h-1h-1V189h-1V191h-1V187h-1V191h-1V187h-1V189h-1V187h-1ZM1222,176h1V174h1V173h1V176h1h1V177h1V176h1V177h1V178h1V177h1h1h1V176h1V177h1V176h1V175h1V177h1V178h1V176h1V177h1h1V178h1V179h1V177h1V175h1V177h1V180h1V176h1V178h1V177h1V178h1V179h1V178h1V180h1V179h1V180h1V178h1V179h1V180h1V183h1V179h1V181h1V180h1V179h1V180h1V179h1V180h1h1h1V193h-1h-1V194h-1h-1V196h-1V192h-1V195h-1V194h-1V190h-1V193h-1h-1V192h-1V191h-1V194h-1V191h-1V193h-1V191h-1V193h-1V189h-1V192h-1V191h-1h-1V190h-1V191h-1h-1V192h-1V190h-1V193h-1V191h-1V194h-1V192h-1V189h-1V190h-1V192h-1V190h-1V192h-1V185h-1V192h-1V190h-1V193h-1V189h-1V190h-1V188h-1V189h-1V193h-1V190h-1V188h-1V186h-1V189h-1Z" fill="#9999ff"/>
<g stroke="#ff8000" stroke-width="1.5"><path d="M216.5,192 V215"/><path d="M777,186 V205"/><path d="M1022,188 V206"/><path d="M549,178 V190"/></g>
<path d="M66,163h1V160h1V162h1V161h1h1V163h1V161h1V159h1V162h1h1V163h1h1h1h1V161h1V162h1h1V158h1V159h1V161h1V162h1h1V161h1V163h1V162h1V161h1V162h1V161h1V160h1V162h1V160h1h1V162h1V160h1V162h1h1h1h1V163h1V161h1V162h1V164h1V162h1V161h1V162h1h1V161h1V164h1h1V162h1V163h1V162h1h1V159h1V163h1h1h1h1V159h1V162h1V161h1h1V162h1h1V161h1V164h1V162h1V163h1V161h1V162h1V161h1V163h1V162h1V163h1V162h1h1V163h1h1h1V162h1V163h1V160h1V159h1V162h1V163h1V165h1V160h1V162h1h1V163h1V162h1h1V164h1V162h1h1V164h1V162h1V161h1V163h1V160h1V165h1V160h1V162h1h1h1V163h1h1h1V160h1V165h1V162h1V161h1h1V159h1V163h1V162h1V161h1h1V163h1h1V160h1V161h1V162h1h1V164h1V162h1h1V161h1V163h1V162h1V163h1h1V162h1V163h1V162h1h1V161h1V162h1h1V161h1V166h1V160h1V161h1V162h1V159h1V162h1V163h1V161h1V163h1h1V160h1V162h1V163h1V160h1h1V162h1V160h1V162h1V163h1V162h1V161h1h1h1V165h1V162h1V160h1V162h1h1V163h1V162h1h1V164h1V163h1V162h1V165h1V163h1V164h1V162h1V161h1V162h1V161h1V162h1V164h1V163h1V162h1h1V161h1V163h1V162h1V160h1V161h1V162h1V163h1h1V162h1h1h1h1h1V163h1V162h1V166h1V159h1V163h1V162h1V163h1V159h1V163h1V165h1h1V160h1V163h1h1V162h1V161h1V162h1V163h1V161h1V162h1V165h1V163h1V161h1V163h1h1V161h1V162h1V163h1h1h1V161h1V164h1V163h1h1V161h1V162h1V161h1V164h1V159h1V160h1V162h1V160h1V165h1V160h1h1V162h1V160h1V164h1V161h1V163h1V160h1V161h1h1V160h1V161h1V162h1V165h1V162h1V163h1V162h1V161h1h1V162h1V161h1V163h1V162h1V161h1V163h1V161h1h1V163h1V162h1V164h1V163h1V162h1V163h1V164h1V162h1V163h1V161h1V163h1V161h1V160h1V163h1V162h1V161h1h1V162h1h1h1V161h1V162h1V161h1V162h1V163h1V162h1V161h1V163h1V162h1V161h1V163h1V161h1V162h1V163h1V166h1V161h1h1V164h1V162h1h1h1V163h1h1V164h1V163h1V161h1V162h1h1h1V163h1V161h1V165h1V159h1V162h1V161h1V163h1V161h1V163h1V162h1V163h1V162h1h1h1h1V161h1V163h1V162h1h1h1V161h1V162h1h1h1V160h1h1V161h1V158h1V162h1V165h1V163h1V164h1V163h1V162h1V160h1V162h1V163h1V162h1V160h1h1V162h1V164h1V161h1V162h1h1V161h1V163h1V161h1V162h1V163h1V164h1h1V160h1V162h1V161h1V163h1V162h1h1V164h1V157h1V162h1h1h1V160h1V164h1V158h1V162h1V161h1V163h1V162h1V161h1h1h1V162h1V161h1V162h1V163h1V162h1V163h1V162h1V163h1V164h1V162h1V160h1V162h1h1V163h1h1h1V162h1h1h1h1h1V160h1V162h1h1V160h1V162h1V160h1V163h1h1V161h1V160h1V162h1V163h1V164h1V162h1h1V163h1h1V161h1h1V162h1h1h1h1h1h1h1V161h1V162h1V161h1h1h1V164h1V163h1V162h1V161h1h1V162h1V163h1h1V162h1V160h1V163h1V162h1h1V160h1V163h1V161h1h1V162h1V165h1V162h1V161h1h1V162h1h1h1V160h1V164h1V160h1V163h1V160h1V162h1h1V161h1V162h1V163h1V162h1h1h1V159h1V163h1V161h1V163h1V162h1V163h1V162h1V164h1V163h1h1h1V161h1V163h1V160h1V163h1h1V162h1V159h1V163h1V162h1h1V163h1V161h1V163h1V162h1V163h1h1V162h1V161h1h1h1V163h1V162h1V164h1V163h1V161h1V160h1V164h1V163h1h1V161h1h1V162h1h1h1h1V165h1V163h1V161h1V163h1V159h1V163h1V162h1h1V161h1V163h1V162h1V164h1V161h1h1h1h1V164h1V162h1V164h1V162h1V160h1V164h1V161h1V160h1V163h1V162h1V161h1V162h1h1h1V165h1V163h1V165h1V162h1h1h1V161h1V162h1h1h1V160h1V163h1h1V165h1V162h1V159h1V163h1V162h1h1h1V161h1h1V160h1V163h1V162h1V164h1V163h1V162h1h1V163h1V162h1h1V160h1V162h1V163h1V164h1V162h1h1V160h1V162h1V161h1V162h1h1V164h1V163h1V164h1V162h1V163h1V161h1V162h1V161h1V160h1h1V162h1V164h1V163h1V162h1V163h1V162h1V163h1V162h1h1V160h1V163h1h1h1V160h1V165h1V161h1V163h1V160h1V162h1h1V161h1h1V163h1V162h1h1V159h1V162h1h1h1V163h1V161h1V162h1V161h1V164h1V163h1V162h1V161h1V162h1V163h1h1V164h1V163h1V161h1h1V163h1V161h1V162h1V163h1h1V160h1V161h1V164h1V165h1V163h1V159h1V166h1V161h1V160h1V162h1V159h1V162h1h1V161h1V163h1V162h1V161h1V162h1h1h1V165h1V162h1V163h1h1V161h1V162h1V163h1h1h1h1V161h1V162h1V160h1V162h1h1V163h1V161h1V162h1V163h1V161h1h1V162h1V161h1h1V162h1h1V163h1V162h1V161h1V163h1V162h1h1V160h1V159h1V160h1V163h1V160h1V162h1V163h1V162h1V163h1V162h1V163h1V165h1V163h1V161h1V163h1V162h1h1V163h1V161h1V162h1h1h1h1V163h1h1V162h1h1V159h1V162h1V161h1V163h1V161h1h1h1V164h1V160h1V162h1V161h1V160h1V161h1V162h1V161h1h1V164h1V162h1V161h1V162h1V160h1V163h1V161h1V162h1h1V163h1V164h1V163h1h1V162h1h1h1V163h1h1h1V162h1h1V161h1V162h1V165h1V161h1V164h1V163h1h1V162h1V161h1V162h1V161h1V162h1h1V163h1V162h1V160h1V162h1V163h1h1V159h1V161h1V163h1V162h1V161h1V162h1V161h1V162h1V163h1V161h1V164h1V162h1V161h1V162h1V161h1V158h1V162h1V164h1V159h1V162h1V163h1h1V164h1V162h1h1V163h1V161h1h1V163h1h1h1V162h1V160h1V163h1h1V162h1h1V163h1h1V158h1V163h1V164h1V162h1h1V163h1h1V161h1V162h1V160h1h1V164h1V162h1h1V163h1V162h1h1V160h1V162h1V164h1V162h1V163h1V162h1V161h1V162h1V163h1V162h1V163h1h1h1V161h1V163h1V157h1V163h1h1V162h1h1h1V166h1V162h1V163h1V162h1V161h1V163h1V160h1V163h1V161h1V162h1h1h1V163h1V162h1h1V163h1V161h1V163h1V162h1V163h1V161h1V162h1h1V161h1V162h1V164h1V163h1V165h1V162h1V160h1V163h1V162h1V163h1V162h1V163h1V162h1V164h1V162h1h1V163h1V161h1V160h1V163h1V160h1V162h1V165h1V162h1V161h1V162h1V161h1h1V163h1V162h1V163h1h1V162h1h1h1V163h1V162h1h1V160h1V163h1V166h1h1V163h1V162h1V165h1V161h1h1h1h1V162h1V161h1h1V162h1V163h1h1V165h1V163h1V162h1h1V163h1V162h1h1V161h1h1V163h1V162h1V163h1V161h1V162h1V160h1V163h1V161h1V163h1h1V161h1V162h1V161h1V163h1V162h1V163h1V165h1V162h1V159h1V161h1V162h1V161h1h1V162h1h1V161h1h1h1h1V162h1V163h1V165h1V161h1h1h1h1V163h1V160h1V164h1V160h1V162h1V163h1V162h1h1V163h1V162h1V161h1V165h1V162h1V163h1V162h1h1V161h1V163h1V162h1V159h1V161h1V163h1V162h1V161h1V162h1V163h1V160h1V162h1V160h1V162h1V163h1h1V162h1V161h1V162h1h1V163h1h1h1h1h1h1h1V162h1V164h1V162h1h1V161h1V159h1V163h1h1V162h1V161h1V162h1h1V164h1V163h1V165h1V161h1V162h1V163h1V160h1V161h1V163h1h1V161h1V163h1h1V160h1V163h1V162h1h1h1V163h1h1V164h1V165h1V164h1V160h1V162h1h1h1V163h1V161h1V162h1V161h1V162h1V163h1V162h1V161h1V162h1h1h1V163h1h1h1V160h1V163h1V160h1V161h1V164h1V163h1V162h1V163h1V160h1V162h1V161h1V160h1V161h1V162h1h1V161h1h1h1V162h1h1V163h1V161h1V164h1V159h1V162h1h1V163h1V161h1V163h1V162h1h1V163h1h1V162h1V163h1h1V162h1V161h1V162h1V161h1h1V163h1V160h1V164h1V162h1V163h1V160h1V162h1V163h1h1V162h1h1V161h1h1h1h1V163h1V162h1h1V160h1V164h1V161h1V163h1V161h1V163h1V160h1V161h1V165h1V163h1h1V159h1V163h1h1h1h1V161h1V163h1h1V161h1h1V162h1h1h1h1V160h1V163h1V161h1V162h1V163h1V162h1V161h1h1h1V164h1V163h1V162h1V160h1V163h1V161h1V164h1h1V163h1V159h1V160h1V163h1V162h1V163h1V164h1V162h1V161h1V162h1V163h1V160h1V165h1V162h1V180h-1V178h-1h-1V179h-1V177h-1V179h-1h-1V178h-1V182h-1V174h-1V177h-1V183h-1V178h-1V177h-1V173h-1V178h-1V177h-1V178h-1V175h-1V177h-1V178h-1V175h-1V177h-1h-1h-1V179h-1V177h-1h-1h-1V180h-1V175h-1V176h-1V177h-1V180h-1h-1V179h-1V177h-1V180h-1V179h-1V177h-1V179h-1V176h-1V175h-1V178h-1h-1V174h-1V179h-1V178h-1h-1V182h-1V173h-1V178h-1V175h-1V176h-1V178h-1V177h-1h-1V178h-1V177h-1h-1V180h-1V177h-1V178h-1h-1V177h-1V176h-1V178h-1V173h-1V181h-1V173h-1V176h-1h-1V177h-1V179h-1V175h-1V177h-1V180h-1V178h-1V174h-1V173h-1V177h-1V179h-1V178h-1h-1V179h-1V182h-1V178h-1V180h-1V178h-1V180h-1V177h-1V184h-1V181h-1V179h-1V180h-1V176h-1V179h-1V177h-1h-1V179h-1h-1V178h-1V176h-1V178h-1h-1V174h-1V178h-1V181h-1V180h-1V182h-1V178h-1V177h-1h-1h-1h-1h-1V178h-1h-1h-1V180h-1V175h-1V180h-1h-1V176h-1V175h-1V177h-1V180h-1V179h-1V177h-1h-1V179h-1V177h-1V178h-1V180h-1V177h-1h-1V178h-1V177h-1V181h-1V178h-1V179h-1V180h-1V178h-1V180h-1V177h-1V178h-1V177h-1V176h-1V174h-1V178h-1V177h-1h-1h-1V176h-1h-1V179h-1V176h-1V174h-1V177h-1V180h-1V179h-1V178h-1V181h-1V178h-1V180h-1V181h-1V174h-1V177h-1V178h-1h-1V177h-1V179h-1h-1V178h-1V177h-1V178h-1V182h-1V181h-1V177h-1V180h-1V178h-1V177h-1V179h-1V175h-1V177h-1h-1V174h-1V177h-1h-1V176h-1V179h-1V177h-1V180h-1V177h-1h-1h-1V178h-1V174h-1V175h-1V178h-1V180h-1V179h-1V178h-1V182h-1V177h-1h-1h-1V176h-1V183h-1V178h-1V177h-1V178h-1V177h-1h-1h-1h-1h-1V175h-1V176h-1V178h-1h-1h-1V180h-1V182h-1V175h-1V177h-1h-1V176h-1V181h-1V179h-1V178h-1V180h-1V176h-1h-1V178h-1h-1h-1V177h-1h-1V175h-1V176h-1V179h-1V178h-1h-1V175h-1h-1V178h-1h-1h-1V177h-1V180h-1V177h-1V175h-1V177h-1V175h-1V177h-1V181h-1V177h-1V180h-1V179h-1V178h-1V182h-1V178h-1h-1h-1V173h-1V178h-1h-1V179h-1V177h-1h-1V176h-1V181h-1V175h-1V178h-1h-1V175h-1V177h-1V178h-1h-1h-1V177h-1V178h-1V177h-1h-1V178h-1h-1V177h-1h-1h-1V179h-1h-1V178h-1V177h-1h-1h-1h-1h-1V178h-1h-1V177h-1V178h-1V177h-1V178h-1V173h-1V180h-1V177h-1V175h-1V179h-1V177h-1h-1h-1V176h-1V180h-1V179h-1V177h-1V181h-1V178h-1V181h-1V180h-1V175h-1V177h-1V179h-1h-1V177h-1V178h-1V181h-1V178h-1V177h-1h-1V178h-1h-1V176h-1V177h-1V180h-1V177h-1V178h-1V179h-1V180h-1h-1V179h-1V177h-1V178h-1V177h-1V175h-1V178h-1V179h-1V182h-1V177h-1h-1V179h-1V178h-1V177h-1h-1V179h-1V178h-1h-1h-1V173h-1V179h-1V175h-1V179h-1h-1V177h-1V179h-1V178h-1h-1V179h-1V177h-1V178h-1V180h-1V178h-1h-1V179h-1V177h-1h-1h-1V180h-1V176h-1V178h-1V180h-1V178h-1V179h-1V181h-1V178h-1V180h-1V178h-1V180h-1V177h-1V176h-1V177h-1h-1h-1h-1V178h-1V175h-1V178h-1h-1V177h-1V179h-1h-1V180h-1V177h-1V174h-1V178h-1V182h-1V179h-1V177h-1h-1V175h-1V178h-1V176h-1V184h-1V178h-1h-1h-1h-1h-1V175h-1V177h-1h-1V178h-1h-1V179h-1V177h-1V176h-1V178h-1V176h-1V178h-1h-1V177h-1V176h-1h-1V183h-1V178h-1h-1h-1h-1V176h-1V177h-1h-1h-1V179h-1h-1V178h-1V177h-1V178h-1V174h-1V177h-1V181h-1h-1V177h-1V178h-1h-1V177h-1V181h-1V177h-1V180h-1V179h-1V176h-1h-1V177h-1V179h-1V178h-1V177h-1h-1h-1V178h-1V179h-1V178h-1V175h-1V178h-1V174h-1V177h-1V178h-1V179h-1V176h-1V177h-1V178h-1h-1V177h-1V178h-1V177h-1h-1h-1h-1h-1V178h-1V176h-1V177h-1h-1V179h-1V180h-1V178h-1h-1h-1V181h-1V178h-1V181h-1V177h-1V178h-1V177h-1h-1V176h-1V177h-1V178h-1V177h-1V176h-1V179h-1h-1V178h-1V177h-1V178h-1V180h-1V177h-1V175h-1V179h-1V177h-1V172h-1V177h-1V179h-1V178h-1h-1V177h-1h-1V179h-1h-1V177h-1h-1V178h-1V180h-1V177h-1h-1V175h-1V179h-1V178h-1h-1V177h-1V178h-1V177h-1V175h-1V177h-1h-1V175h-1V179h-1V178h-1h-1h-1V177h-1h-1h-1V178h-1V177h-1h-1V178h-1h-1V179h-1V175h-1h-1V177h-1V178h-1h-1h-1V177h-1h-1V176h-1h-1V177h-1h-1V179h-1V177h-1V178h-1V176h-1V177h-1V178h-1V181h-1V175h-1V180h-1V178h-1h-1h-1V177h-1V174h-1V180h-1V178h-1V177h-1h-1h-1h-1h-1V178h-1h-1V177h-1V178h-1V177h-1h-1V178h-1V181h-1h-1V177h-1V178h-1V180h-1V176h-1V181h-1V177h-1h-1V176h-1h-1V177h-1V174h-1V178h-1V179h-1h-1V177h-1V180h-1V175h-1V177h-1V178h-1V177h-1h-1h-1V176h-1V177h-1V178h-1V179h-1V181h-1V179h-1V182h-1V180h-1h-1V176h-1V178h-1h-1V175h-1V178h-1V181h-1V175h-1V180h-1V178h-1V177h-1h-1V173h-1V178h-1V177h-1V179h-1h-1V177h-1V178h-1V179h-1V178h-1V177h-1V178h-1V177h-1V178h-1V180h-1V177h-1h-1V179h-1V177h-1h-1V178h-1V177h-1h-1h-1V181h-1V176h-1V177h-1h-1h-1V174h-1V177h-1V179h-1V178h-1h-1V180h-1V182h-1V177h-1V176h-1V180h-1V177h-1h-1h-1V178h-1V179h-1V180h-1V179h-1V178h-1h-1V179h-1h-1V177h-1V178h-1V179h-1V177h-1h-1h-1V179h-1V178h-1V176h-1V175h-1V174h-1V175h-1h-1V179h-1V177h-1V178h-1V180h-1V177h-1V178h-1h-1V176h-1V183h-1V177h-1V178h-1V180h-1V178h-1h-1V180h-1V177h-1h-1h-1h-1V179h-1V177h-1h-1V180h-1V178h-1V179h-1V178h-1V176h-1V177h-1V178h-1V179h-1V175h-1V182h-1V177h-1h-1V178h-1V182h-1V180h-1V177h-1V180h-1V177h-1V178h-1V173h-1V177h-1V176h-1h-1V186h-1V177h-1h-1V178h-1V179h-1V176h-1V178h-1V179h-1h-1V178h-1h-1V179h-1V177h-1V180h-1V175h-1V177h-1h-1h-1V179h-1V178h-1V179h-1V180h-1V178h-1V181h-1V177h-1V176h-1V177h-1h-1V179h-1h-1V178h-1V177h-1V178h-1V179h-1V177h-1V178h-1V172h-1V175h-1V179h-1V181h-1V180h-1V177h-1h-1V179h-1V177h-1V179h-1V178h-1V180h-1V178h-1V180h-1V173h-1V175h-1V178h-1V177h-1V180h-1h-1V177h-1V178h-1h-1h-1V177h-1V181h-1V180h-1V177h-1V179h-1V173h-1V178h-1V177h-1V178h-1V184h-1V178h-1h-1V180h-1V177h-1V176h-1V178h-1V176h-1V180h-1V178h-1h-1V177h-1V178h-1V175h-1V177h-1V179h-1V178h-1V181h-1V177h-1h-1V179h-1V177h-1V181h-1V177h-1V178h-1V176h-1V178h-1V175h-1V179h-1V177h-1h-1h-1h-1V179h-1V177h-1V175h-1V176h-1V175h-1h-1V178h-1h-1V179h-1h-1V177h-1h-1V180h-1V177h-1h-1h-1V179h-1V178h-1V177h-1V178h-1V176h-1V180h-1V176h-1V178h-1V179h-1V178h-1V176h-1V179h-1V177h-1V180h-1V178h-1V179h-1V178h-1h-1V180h-1h-1h-1V177h-1h-1h-1V179h-1V177h-1V178h-1V179h-1V177h-1h-1h-1V179h-1V177h-1V179h-1V177h-1h-1V179h-1V178h-1V180h-1V178h-1V177h-1V178h-1h-1V176h-1V177h-1h-1V180h-1V177h-1V176h-1V174h-1V177h-1h-1V179h-1V178h-1V177h-1V178h-1V182h-1V177h-1h-1V179h-1V177h-1V180h-1V179h-1h-1V177h-1h-1h-1V178h-1h-1V177h-1h-1V178h-1V177h-1h-1V178h-1V177h-1V178h-1h-1V180h-1V179h-1V177h-1h-1h-1V180h-1V176h-1V179h-1V180h-1V179h-1V177h-1V175h-1V178h-1V180h-1V178h-1h-1V175h-1V178h-1V177h-1h-1V178h-1V177h-1V175h-1V178h-1h-1V177h-1V179h-1V177h-1V179h-1V178h-1h-1h-1h-1h-1V177h-1h-1V175h-1V177h-1V179h-1V177h-1V179h-1V182h-1V175h-1V177h-1h-1h-1V178h-1V177h-1h-1h-1V179h-1V174h-1V177h-1V181h-1V179h-1V177h-1V178h-1V179h-1V178h-1V177h-1V179h-1h-1V177h-1V173h-1V180h-1V177h-1V178h-1V174h-1V178h-1V179h-1V180h-1V178h-1V177h-1V178h-1V179h-1V177h-1V178h-1V177h-1V180h-1V173h-1V175h-1V178h-1V177h-1h-1V179h-1V178h-1V183h-1V177h-1V178h-1V176h-1V178h-1V180h-1V177h-1V175h-1V178h-1V180h-1V181h-1V177h-1h-1h-1V179h-1V178h-1V179h-1V178h-1V185h-1V179h-1V180h-1V177h-1V182h-1V178h-1V176h-1V177h-1h-1V180h-1V176h-1V177h-1h-1V176h-1V179h-1V180h-1V178h-1V174h-1V177h-1h-1V178h-1h-1V176h-1V177h-1V179h-1V177h-1V176h-1V178h-1V175h-1V180h-1V177h-1V179h-1V177h-1V180h-1V176h-1V177h-1V179h-1V178h-1h-1h-1V176h-1V175h-1V180h-1V177h-1V176h-1V177h-1V178h-1V181h-1h-1V180h-1V181h-1V179h-1h-1h-1V177h-1V173h-1V177h-1V178h-1h-1h-1h-1V175h-1V179h-1V177h-1V178h-1h-1V179h-1V177h-1V181h-1V179h-1V178h-1V177h-1V178h-1V181h-1V178h-1V179h-1V175h-1V177h-1V178h-1V176h-1V178h-1V175h-1V179h-1h-1V176h-1V179h-1V176h-1V177h-1V175h-1V176h-1V178h-1V177h-1V180h-1V178h-1V177h-1h-1h-1V178h-1V179h-1V180h-1V178h-1V177h-1V179h-1V177h-1V178h-1h-1V172h-1V183h-1V177h-1V176h-1V179h-1h-1V178h-1V179h-1V177h-1V178h-1V177h-1V178h-1V176h-1V177h-1V175h-1V177h-1V178h-1V177h-1V181h-1V180h-1V177h-1V181h-1V182h-1V176h-1V180h-1h-1h-1V178h-1V177h-1V178h-1V177h-1V178h-1V176h-1V178h-1V180h-1V178h-1V175h-1V178h-1V177h-1V178h-1h-1V181h-1V180h-1V178h-1h-1V177h-1V180h-1h-1V178h-1V177h-1V179h-1Z" fill="#ff8000"/>
<path d="M66,144h1V140h1h1V141h1V143h1V141h1h1h1V138h1V137h1V141h1V138h1V141h1V140h1V145h1V138h1V141h1V136h1V140h1V141h1h1V140h1V137h1V142h1V140h1V141h1V139h1V141h1V140h1V141h1h1V142h1V141h1h1h1V142h1V141h1V140h1V138h1V140h1V141h1h1h1V140h1V141h1V138h1V141h1V139h1V145h1V144h1V141h1h1V143h1V146h1V141h1h1V145h1V140h1V141h1V139h1V140h1V141h1V142h1V140h1V141h1V140h1V139h1h1V140h1V138h1V142h1V138h1V141h1V142h1V140h1h1V141h1h1h1V140h1V138h1V142h1V143h1V142h1h1V140h1V141h1V139h1V140h1V136h1V138h1V139h1V142h1V136h1V140h1V139h1V143h1V139h1V138h1V139h1h1V138h1V141h1V143h1V139h1V140h1V139h1V141h1V142h1h1V140h1V142h1V139h1V140h1V139h1V137h1h1V141h1h1V142h1V138h1V144h1V141h1V139h1V141h1h1V140h1h1V141h1V140h1V139h1V140h1h1h1V141h1h1V142h1V141h1V138h1V141h1V143h1V140h1h1V143h1V141h1V140h1V144h1V140h1V145h1V142h1V141h1V143h1V141h1V142h1V139h1V142h1V141h1h1V140h1V139h1h1V141h1V138h1V141h1V140h1V143h1V141h1V144h1V135h1V143h1V141h1h1V140h1V146h1V141h1V139h1V142h1V140h1h1V139h1V141h1h1V145h1V137h1V139h1V136h1V140h1V142h1V138h1V141h1h1V143h1V139h1V143h1V138h1V142h1V141h1V137h1V139h1V140h1V141h1V140h1V139h1h1h1V142h1V139h1V143h1V140h1h1V139h1V141h1V140h1V141h1h1V138h1V142h1V141h1V142h1V140h1V141h1h1h1V140h1h1V141h1V139h1V140h1V136h1V141h1V139h1V143h1V140h1h1h1V141h1V140h1h1V141h1V140h1V141h1V140h1V138h1V142h1V141h1h1V140h1V142h1V141h1V140h1V137h1V140h1V134h1V139h1h1V144h1h1V141h1V138h1V140h1V141h1V142h1V141h1V139h1V141h1V136h1V137h1V139h1V141h1h1V140h1V141h1V142h1V139h1V141h1V140h1V138h1V143h1V140h1V141h1V138h1V142h1h1V137h1V141h1h1V138h1V139h1V140h1V141h1V140h1V143h1V140h1V138h1V139h1h1V145h1V140h1V141h1V138h1V139h1V141h1h1V140h1V141h1V138h1V140h1V141h1h1V139h1V142h1V141h1h1V139h1V143h1V140h1V138h1V140h1V138h1V141h1h1V136h1V142h1h1h1V139h1V142h1V138h1V140h1h1h1V145h1V140h1V141h1V138h1V141h1V139h1V140h1h1V136h1V146h1V139h1V144h1V139h1V140h1V141h1h1V136h1V141h1V140h1V141h1V142h1V137h1V138h1h1V140h1V135h1V137h1V141h1h1V140h1V141h1V140h1h1V138h1V139h1V141h1V135h1V142h1V138h1V140h1h1V141h1h1V143h1V140h1V141h1V140h1V138h1V142h1V145h1V144h1V140h1V141h1V143h1V141h1V140h1V139h1V138h1V140h1V139h1V142h1h1h1V141h1V142h1V141h1V136h1V140h1V142h1V141h1V142h1V140h1h1V143h1V145h1V141h1V137h1V139h1h1V138h1V140h1V141h1h1V140h1V141h1V140h1V142h1V141h1V134h1V138h1V146h1V141h1V139h1V141h1V142h1V138h1h1V142h1V141h1V143h1V141h1h1V136h1V142h1V139h1h1V136h1V141h1V143h1V140h1V141h1V142h1V138h1V141h1V143h1V140h1V141h1V144h1V141h1V144h1V141h1h1V144h1V140h1V141h1h1V140h1V138h1V139h1h1V143h1V140h1h1h1V144h1h1V141h1V143h1h1h1V141h1V140h1V136h1V139h1V140h1V141h1V140h1h1V139h1V142h1V140h1V142h1V141h1V140h1V141h1V139h1V144h1V141h1h1h1V142h1V141h1V140h1h1V143h1V139h1V141h1V140h1h1V142h1V139h1V145h1V139h1V141h1V138h1V140h1V137h1V136h1V142h1h1V139h1V141h1V143h1V139h1V138h1V140h1V141h1V142h1V138h1V141h1V140h1h1V142h1V139h1V142h1h1V141h1V139h1V136h1V140h1V141h1V139h1V143h1V139h1h1V141h1V143h1V139h1V141h1V138h1V141h1V142h1V141h1V139h1h1V141h1h1V145h1V143h1V142h1V140h1V141h1V140h1V139h1V141h1V139h1V143h1V141h1V142h1h1V140h1V142h1V140h1V141h1V140h1V139h1V140h1V142h1V141h1V139h1V141h1V139h1V140h1V138h1V140h1V141h1V142h1V141h1V142h1V141h1V143h1V140h1V141h1V142h1V140h1h1h1V142h1V143h1V142h1V138h1V141h1V140h1V141h1V138h1V140h1h1h1h1V138h1V139h1V142h1V141h1h1V140h1V139h1h1V141h1V138h1V142h1V137h1V141h1V140h1h1V141h1V140h1V138h1h1V141h1V137h1V140h1V141h1V140h1V142h1V140h1V142h1V141h1V140h1V142h1V140h1h1V145h1V142h1V141h1V139h1V141h1V142h1V141h1V144h1V141h1h1V145h1V142h1V140h1h1h1V141h1V140h1h1V137h1V143h1h1V142h1V141h1V137h1V142h1V136h1V140h1V143h1V141h1V142h1V138h1V141h1V142h1V140h1V141h1V145h1V143h1V138h1V142h1h1h1h1V137h1V141h1V138h1h1V135h1V140h1V142h1V138h1V142h1V139h1V141h1V144h1V140h1V144h1V140h1V139h1V141h1V140h1h1h1V142h1V143h1V142h1V144h1V140h1h1V141h1V142h1V140h1V137h1V145h1V140h1V141h1V138h1V140h1h1V141h1V144h1V142h1V141h1V146h1V139h1V140h1h1h1V139h1V142h1V140h1h1V137h1V141h1V140h1V143h1V141h1V139h1V141h1h1V144h1V138h1V139h1V142h1V137h1h1V142h1V141h1V140h1V137h1V141h1h1V140h1V139h1V138h1V140h1V139h1V141h1V140h1V138h1h1V141h1V135h1V140h1V142h1V141h1V142h1V140h1V142h1V141h1V140h1V141h1V145h1V141h1h1V139h1V141h1V139h1V141h1V137h1V141h1V137h1V144h1V140h1h1V137h1V142h1V140h1V143h1V136h1V141h1V137h1V141h1V143h1V140h1V139h1V141h1h1h1h1V139h1V141h1V140h1V141h1h1h1V139h1V133h1V142h1V139h1V142h1V140h1h1V141h1h1V143h1V144h1V139h1V144h1V141h1h1V138h1V141h1h1h1h1V139h1V140h1V139h1V140h1V139h1h1V141h1V144h1V140h1V144h1V139h1V140h1h1V135h1V139h1V140h1V141h1h1h1V143h1V141h1V137h1V141h1h1h1V140h1V141h1V138h1V139h1V140h1V139h1V140h1V139h1V142h1V139h1V142h1V141h1V138h1V141h1h1V140h1V141h1h1V144h1V142h1V140h1V145h1V141h1V140h1V138h1V139h1V136h1V142h1V141h1h1V137h1h1h1V141h1V139h1V146h1V143h1V140h1h1V138h1V142h1V139h1V143h1V141h1V137h1V139h1V138h1V141h1h1V140h1V142h1V140h1V144h1V141h1V138h1V139h1V144h1V141h1h1V142h1V140h1h1h1V141h1V140h1V138h1V141h1V140h1V142h1V140h1V143h1V140h1h1h1V142h1V140h1V137h1V141h1V142h1h1V141h1V139h1V140h1V138h1V141h1V139h1h1V137h1V143h1V144h1V145h1V141h1V139h1V141h1V140h1V141h1V140h1V141h1V142h1V144h1V140h1V141h1V140h1V141h1V139h1V143h1V141h1h1h1h1V143h1h1V140h1V136h1V142h1h1V141h1V138h1V141h1h1h1V143h1V139h1V140h1V139h1V140h1V136h1V141h1V136h1V140h1h1V139h1h1V142h1h1V140h1h1V144h1V142h1V139h1V136h1V142h1V141h1V135h1V140h1h1V138h1V143h1V139h1V141h1V142h1V141h1V136h1V139h1h1V142h1V137h1V135h1V137h1V138h1V139h1V141h1V140h1h1h1V142h1V138h1V141h1V139h1h1V140h1V138h1V141h1h1h1V140h1V141h1V139h1V141h1V140h1V145h1V137h1V141h1V137h1V141h1V136h1V143h1V140h1V139h1V145h1V141h1V144h1V140h1V144h1V139h1V145h1V140h1V136h1V142h1V141h1V140h1V139h1V141h1h1V138h1V139h1h1V141h1V143h1V140h1h1h1V139h1V142h1V143h1V144h1V138h1V140h1V141h1h1V143h1V139h1V141h1h1V138h1V137h1V138h1h1V141h1V142h1h1V139h1V140h1h1V141h1V142h1V137h1V141h1V140h1h1h1V139h1h1V140h1V141h1V138h1V139h1V144h1V139h1V142h1V141h1V143h1V141h1V137h1V141h1V139h1V141h1h1h1V138h1V143h1V139h1V140h1V141h1V139h1V141h1h1V140h1V141h1V140h1V143h1V138h1V142h1V138h1V144h1V142h1V140h1V142h1V139h1V140h1V137h1V139h1V140h1V141h1h1V139h1V141h1h1V138h1V141h1V138h1V141h1h1V134h1V137h1V140h1V138h1V141h1V140h1V144h1V146h1V139h1V141h1V139h1V141h1h1V140h1V142h1V139h1V138h1V142h1V139h1V137h1V146h1V141h1V139h1V142h1V140h1V141h1V139h1h1V141h1h1V139h1V140h1h1V138h1V140h1V139h1V141h1h1V140h1V141h1V142h1V141h1V140h1V141h1h1V138h1V142h1V143h1V142h1V140h1V142h1V141h1h1h1V143h1V141h1V143h1V140h1V141h1V139h1V141h1h1V142h1V141h1V140h1V139h1V143h1V141h1V143h1V141h1V161h-1V159h-1h-1V158h-1V159h-1h-1V161h-1V162h-1V158h-1V163h-1V159h-1V157h-1h-1V161h-1h-1V159h-1V160h-1V158h-1V157h-1V158h-1V160h-1V159h-1V160h-1V156h-1V159h-1V160h-1V161h-1V158h-1V157h-1V158h-1V161h-1V159h-1V160h-1V161h-1V159h-1V160h-1V159h-1h-1V158h-1V160h-1V159h-1V157h-1V160h-1V159h-1h-1h-1h-1V162h-1V158h-1V159h-1V161h-1V158h-1V159h-1V163h-1V158h-1V161h-1V158h-1V160h-1V158h-1V159h-1h-1V158h-1V160h-1V159h-1V160h-1V158h-1V159h-1h-1V160h-1h-1h-1V157h-1V161h-1V155h-1V163h-1V159h-1h-1h-1V162h-1V165h-1V160h-1h-1h-1V159h-1V161h-1V156h-1V159h-1V158h-1h-1V159h-1h-1h-1V160h-1V159h-1h-1V160h-1h-1V158h-1V159h-1V160h-1V159h-1V161h-1h-1V159h-1V158h-1V159h-1h-1V157h-1V164h-1V156h-1V159h-1V160h-1V156h-1V160h-1V159h-1h-1h-1h-1V161h-1V158h-1V159h-1V161h-1V158h-1V157h-1V160h-1V159h-1h-1V161h-1V160h-1V159h-1V160h-1V159h-1V160h-1V159h-1h-1V160h-1V157h-1V158h-1V161h-1V162h-1V159h-1h-1V161h-1V159h-1h-1h-1h-1V157h-1h-1V160h-1V157h-1V159h-1V158h-1h-1V160h-1h-1V158h-1V161h-1h-1h-1V159h-1V158h-1V157h-1V160h-1V161h-1V160h-1V158h-1h-1V157h-1V160h-1h-1V158h-1V159h-1V155h-1V160h-1V159h-1V157h-1V161h-1V157h-1h-1V159h-1h-1V158h-1V160h-1V158h-1h-1h-1V160h-1h-1h-1h-1V161h-1V160h-1V159h-1h-1h-1V160h-1V159h-1h-1h-1V160h-1V161h-1h-1V159h-1h-1h-1V155h-1V161h-1V159h-1V161h-1V158h-1V160h-1h-1V159h-1h-1h-1h-1V162h-1V159h-1V160h-1V159h-1h-1V160h-1V159h-1h-1V157h-1V159h-1h-1V156h-1V160h-1V158h-1V163h-1V160h-1V156h-1V159h-1V164h-1V159h-1h-1h-1h-1h-1h-1V157h-1V161h-1V159h-1V161h-1V159h-1h-1V158h-1V161h-1V160h-1V159h-1V160h-1h-1V158h-1V159h-1h-1h-1h-1h-1V161h-1V159h-1h-1V158h-1V159h-1V160h-1V157h-1V159h-1h-1V160h-1V161h-1h-1V163h-1V159h-1V160h-1V158h-1V160h-1V154h-1V160h-1V159h-1V158h-1h-1V160h-1V161h-1h-1V157h-1V159h-1h-1h-1V160h-1V159h-1V158h-1V159h-1V161h-1V158h-1V159h-1h-1V160h-1V163h-1V159h-1V156h-1V159h-1V158h-1h-1V161h-1V165h-1V160h-1h-1V162h-1V158h-1V159h-1V156h-1h-1V161h-1V157h-1V159h-1V160h-1h-1V156h-1V157h-1h-1V161h-1V158h-1V159h-1V160h-1h-1V162h-1V158h-1V160h-1h-1V158h-1V157h-1V163h-1V158h-1V159h-1h-1V158h-1V159h-1V160h-1V161h-1V160h-1V158h-1V159h-1V160h-1V158h-1V159h-1V160h-1h-1h-1V158h-1V157h-1V159h-1V158h-1V160h-1h-1V161h-1V160h-1V162h-1V161h-1V159h-1h-1V161h-1V159h-1V158h-1V156h-1V162h-1V159h-1h-1V158h-1V159h-1V160h-1V159h-1h-1h-1h-1V160h-1V157h-1V160h-1h-1V157h-1h-1V162h-1V160h-1V156h-1V159h-1h-1V161h-1V159h-1V162h-1V156h-1V158h-1V161h-1V159h-1V160h-1V159h-1V160h-1V159h-1V160h-1V166h-1V160h-1V159h-1h-1V158h-1V159h-1V160h-1V159h-1h-1V157h-1V159h-1h-1V158h-1V159h-1V158h-1V160h-1h-1V157h-1V159h-1V157h-1V159h-1V158h-1V162h-1V159h-1h-1h-1V158h-1V162h-1V159h-1h-1V161h-1V159h-1V160h-1V159h-1h-1h-1V157h-1V162h-1V159h-1h-1h-1h-1h-1V157h-1V160h-1V159h-1V158h-1V159h-1V157h-1V159h-1h-1h-1V158h-1V160h-1V159h-1V161h-1V159h-1V156h-1V157h-1V158h-1V159h-1h-1V161h-1V159h-1h-1V162h-1V159h-1V161h-1V160h-1V162h-1V159h-1V160h-1V158h-1V159h-1V161h-1h-1V160h-1V161h-1V155h-1V157h-1V159h-1V158h-1V159h-1V161h-1h-1V160h-1V159h-1V160h-1V159h-1V160h-1V161h-1V159h-1V157h-1V158h-1V160h-1V159h-1V162h-1V158h-1V159h-1h-1h-1h-1V162h-1V161h-1V159h-1V160h-1V162h-1V159h-1V161h-1V162h-1V158h-1V160h-1V161h-1V158h-1V160h-1V158h-1V159h-1V160h-1V157h-1h-1V159h-1V160h-1V159h-1h-1V161h-1V159h-1V158h-1V160h-1V161h-1V157h-1V158h-1V159h-1h-1V160h-1h-1V159h-1V160h-1h-1V155h-1V159h-1V160h-1h-1h-1h-1V161h-1h-1h-1V160h-1V161h-1h-1V160h-1V161h-1h-1h-1V158h-1V159h-1h-1V161h-1V160h-1h-1V159h-1h-1V157h-1V160h-1V162h-1V160h-1V159h-1h-1h-1V160h-1V162h-1V160h-1h-1V161h-1V165h-1V158h-1V159h-1V160h-1h-1V157h-1V158h-1V159h-1V158h-1V160h-1V159h-1V158h-1V159h-1V163h-1V158h-1V162h-1V160h-1V159h-1h-1h-1V158h-1V161h-1V160h-1V156h-1V159h-1V157h-1V160h-1V159h-1V160h-1V159h-1V161h-1V162h-1V161h-1V159h-1V161h-1h-1V157h-1V160h-1h-1h-1V164h-1V159h-1V160h-1V161h-1V159h-1V158h-1V159h-1V160h-1V161h-1V159h-1V160h-1V163h-1V158h-1V159h-1V160h-1V159h-1V163h-1V161h-1h-1V159h-1V160h-1V158h-1V159h-1V158h-1V159h-1V160h-1V159h-1V161h-1V158h-1V157h-1V161h-1V160h-1V158h-1V157h-1V159h-1V158h-1V155h-1V159h-1h-1V162h-1V160h-1h-1V159h-1h-1V160h-1V157h-1h-1V160h-1V158h-1V157h-1V159h-1V163h-1V160h-1V159h-1V160h-1V159h-1V160h-1V157h-1V161h-1h-1V160h-1V158h-1V157h-1V159h-1V161h-1V160h-1V156h-1h-1V160h-1V159h-1V161h-1V156h-1V160h-1V157h-1V158h-1h-1V159h-1V161h-1V159h-1V157h-1h-1V156h-1V159h-1V158h-1V160h-1V159h-1V161h-1V156h-1V160h-1V159h-1h-1V160h-1V157h-1V159h-1V158h-1V160h-1V159h-1V157h-1V158h-1V155h-1V165h-1V159h-1V158h-1h-1V159h-1V163h-1V157h-1V159h-1V161h-1h-1V164h-1V159h-1V160h-1h-1V159h-1h-1h-1V158h-1V157h-1V162h-1V158h-1V160h-1V164h-1V160h-1V161h-1V160h-1V159h-1h-1V161h-1V163h-1V159h-1V158h-1V160h-1V159h-1V158h-1V157h-1V160h-1h-1h-1h-1V157h-1V160h-1V159h-1h-1V161h-1h-1V159h-1h-1h-1V160h-1V158h-1V159h-1V162h-1V159h-1V160h-1h-1h-1V156h-1V160h-1V156h-1V157h-1V158h-1h-1V159h-1V160h-1V158h-1V159h-1V160h-1h-1V159h-1V161h-1h-1V162h-1V160h-1V159h-1h-1h-1V160h-1V156h-1V160h-1V159h-1h-1V158h-1h-1V163h-1V158h-1V160h-1V158h-1V160h-1V159h-1V160h-1V159h-1h-1h-1h-1h-1V160h-1h-1V159h-1V160h-1V159h-1V161h-1V159h-1V160h-1h-1V159h-1V157h-1V159h-1V161h-1V160h-1h-1V158h-1h-1V159h-1V160h-1V159h-1V160h-1V158h-1V156h-1V158h-1V159h-1V161h-1V159h-1V158h-1V159h-1h-1V157h-1V161h-1V160h-1V161h-1V159h-1V160h-1V159h-1h-1h-1h-1V158h-1h-1V159h-1V160h-1V159h-1V158h-1V159h-1V162h-1V161h-1h-1h-1V159h-1V158h-1V159h-1V157h-1V159h-1V157h-1V159h-1V158h-1V159h-1h-1h-1V158h-1V159h-1V163h-1V162h-1V161h-1V158h-1V161h-1V158h-1V160h-1V159h-1V161h-1V160h-1V162h-1V160h-1V157h-1V160h-1h-1V158h-1V159h-1V161h-1V159h-1V161h-1V160h-1h-1h-1V159h-1h-1V160h-1V161h-1h-1V160h-1h-1V159h-1V160h-1h-1h-1h-1V157h-1V159h-1h-1V158h-1V160h-1V159h-1h-1V161h-1V157h-1V159h-1h-1V160h-1V156h-1V159h-1V157h-1V158h-1V161h-1V156h-1V160h-1V158h-1V160h-1V158h-1V159h-1V158h-1V162h-1V160h-1V159h-1V155h-1V161h-1h-1V156h-1V160h-1V163h-1V160h-1V157h-1V161h-1V159h-1V157h-1V161h-1V158h-1V159h-1h-1h-1V161h-1V159h-1h-1V160h-1V159h-1V158h-1h-1V160h-1V159h-1V162h-1V160h-1h-1h-1V159h-1V158h-1V159h-1h-1V162h-1V164h-1V160h-1h-1V161h-1V159h-1V162h-1V161h-1V162h-1V160h-1V159h-1h-1V158h-1V160h-1h-1V158h-1V159h-1h-1h-1V158h-1V160h-1V159h-1h-1V157h-1V159h-1V157h-1V161h-1V160h-1V161h-1V159h-1V160h-1V159h-1V158h-1V159h-1V162h-1V159h-1V158h-1h-1V157h-1V158h-1V157h-1V161h-1V160h-1h-1V157h-1V160h-1V161h-1V164h-1V159h-1V158h-1V159h-1V161h-1V160h-1h-1V158h-1V159h-1V160h-1V159h-1h-1h-1V158h-1h-1V160h-1V159h-1h-1h-1V160h-1h-1V159h-1h-1h-1V160h-1V159h-1h-1h-1h-1V160h-1V159h-1V162h-1V158h-1V159h-1h-1h-1V161h-1V158h-1V160h-1V159h-1V158h-1V159h-1V161h-1V159h-1V158h-1V160h-1V159h-1V161h-1V159h-1V160h-1h-1h-1V158h-1V159h-1V160h-1h-1V161h-1V159h-1V160h-1h-1h-1h-1V159h-1V160h-1V159h-1V160h-1V158h-1V159h-1h-1h-1V158h-1V159h-1V161h-1h-1h-1V160h-1V158h-1V160h-1V158h-1h-1V161h-1V159h-1h-1V160h-1V158h-1V155h-1V160h-1V159h-1V161h-1V158h-1V160h-1V156h-1V157h-1V159h-1V162h-1V160h-1V161h-1V160h-1h-1V159h-1h-1h-1h-1h-1V156h-1V159h-1V158h-1V159h-1h-1V158h-1V161h-1V158h-1V160h-1h-1V162h-1V159h-1h-1h-1V160h-1h-1V158h-1V157h-1V161h-1V160h-1V159h-1h-1V161h-1V159h-1V162h-1V157h-1V159h-1h-1h-1V160h-1V161h-1V159h-1V162h-1V156h-1V161h-1V157h-1V162h-1V159h-1h-1h-1h-1V158h-1V160h-1h-1h-1V159h-1h-1h-1h-1V160h-1V159h-1h-1h-1V160h-1h-1V159h-1V160h-1V159h-1V162h-1V160h-1V158h-1V160h-1h-1V157h-1V160h-1V157h-1h-1V160h-1h-1V159h-1V158h-1V162h-1V159h-1V158h-1V160h-1V159h-1h-1V160h-1V159h-1V161h-1h-1V159h-1V158h-1V159h-1V164h-1V157h-1V160h-1Z" fill="#00ff00"/>
<g stroke="#00ff00" stroke-width="1.2"><path d="M79,130 V142"/><path d="M127,131 V142"/><path d="M557,128 V143"/><path d="M598,133 V143"/><path d="M1057,130 V143"/><path d="M1245,134 V143"/><path d="M104,170 V182"/><path d="M107,172 V181"/><path d="M685,166 V178"/><path d="M924,166 V176"/><path d="M1168,166 V180"/></g>
<path d="M66,111h1V116h1V112h1V111h1V113h1h1h1h1V112h1V113h1V112h1V113h1h1h1V114h1V111h1V113h1V112h1V113h1V114h1h1V112h1V113h1V115h1V111h1V113h1V112h1V108h1V113h1h1h1V116h1V113h1V112h1V113h1V111h1V110h1V113h1V111h1V113h1V114h1V113h1V112h1V111h1V112h1V111h1h1V112h1V113h1V112h1V114h1V113h1h1V111h1V113h1h1V114h1V110h1V111h1V113h1V115h1V113h1V112h1h1V113h1V111h1V112h1h1h1V113h1V111h1V112h1V113h1h1h1V112h1V111h1h1V112h1h1V113h1V111h1V113h1h1h1h1V112h1h1V111h1V112h1V113h1h1h1V112h1V111h1V113h1h1V111h1V113h1h1V114h1V113h1h1h1h1V111h1V112h1V113h1V114h1V115h1V111h1V112h1V113h1h1V111h1V113h1V112h1V114h1V113h1h1h1V112h1V111h1h1V112h1V115h1V113h1V110h1V111h1V113h1V115h1h1V112h1V113h1V112h1V113h1V111h1V113h1h1h1V110h1V113h1h1V112h1h1V113h1V112h1V111h1V113h1V117h1V115h1V113h1V115h1h1V112h1h1V109h1V112h1V113h1V112h1V113h1h1V112h1h1V111h1V110h1V113h1V111h1V113h1h1h1V112h1h1V111h1V113h1V112h1h1h1V113h1h1h1V110h1V112h1V113h1h1V112h1V111h1V110h1V113h1V112h1V110h1V112h1h1V111h1V115h1V110h1V108h1V110h1V112h1V113h1V116h1V110h1V113h1V112h1V113h1V112h1V113h1h1V112h1V114h1V112h1V113h1h1h1V112h1h1h1V115h1V112h1h1V113h1V112h1V115h1V113h1h1h1h1V111h1V112h1V113h1V111h1V113h1V111h1V112h1V110h1V113h1h1h1V112h1V111h1V112h1h1h1h1V114h1V113h1V112h1V111h1V112h1h1h1h1V111h1V112h1V111h1V112h1V111h1V113h1V111h1V113h1h1h1h1V112h1h1h1h1V113h1V114h1V113h1V112h1V113h1h1h1V116h1V111h1V113h1V112h1V113h1V111h1V113h1h1V112h1V113h1V110h1V113h1V112h1V111h1V112h1h1V111h1V112h1h1V113h1V112h1V113h1V112h1V114h1V111h1V116h1V113h1h1V112h1V113h1V111h1V113h1h1h1V115h1V111h1V113h1V109h1V113h1V112h1V109h1V112h1V114h1h1V111h1V113h1V114h1V113h1h1h1h1V111h1V113h1V112h1V113h1h1V111h1V112h1V113h1V110h1V111h1V113h1V111h1V112h1V114h1V113h1V112h1V113h1V112h1V114h1h1V112h1h1V111h1V116h1V112h1V111h1V112h1V115h1V109h1V112h1h1V113h1h1V111h1V112h1h1h1V111h1V110h1h1V113h1V114h1V113h1V112h1V115h1V116h1V113h1h1h1V111h1V112h1V113h1h1V109h1V113h1V114h1V111h1V112h1V111h1V113h1V112h1V113h1V112h1h1h1V113h1h1h1V109h1V111h1V113h1h1V114h1V112h1h1V114h1V113h1h1V114h1h1V112h1V114h1V112h1V113h1V111h1V112h1V113h1V112h1V114h1V112h1h1V113h1V112h1h1V113h1V109h1V113h1h1V112h1V115h1V112h1V114h1V113h1V112h1V115h1V111h1V113h1V112h1h1V114h1V112h1V111h1h1V112h1V114h1V113h1V112h1V113h1h1V112h1V111h1V113h1h1h1h1V112h1V114h1V112h1V111h1V113h1h1V111h1V110h1h1V113h1h1V114h1V115h1V111h1V112h1V115h1V113h1h1h1h1V112h1V113h1h1h1V112h1V113h1V112h1V109h1V110h1V111h1V112h1h1V113h1h1V114h1V110h1V112h1V113h1h1h1V112h1V111h1V113h1V111h1V112h1V113h1V111h1V112h1h1V111h1V113h1h1h1h1V115h1V112h1h1V113h1V112h1h1V113h1V112h1V110h1V112h1V113h1V111h1V112h1V111h1V114h1h1V112h1V115h1V112h1V114h1h1V113h1V111h1V113h1V115h1V112h1h1V113h1h1h1h1V109h1V112h1V113h1h1h1V111h1h1V109h1V111h1V112h1V113h1V111h1V113h1h1V111h1V114h1V109h1V113h1V112h1V113h1V109h1V113h1V110h1V112h1V113h1h1h1h1V110h1V113h1V112h1h1h1V114h1V113h1h1V111h1V112h1h1h1V110h1V113h1V116h1V113h1V112h1V113h1V112h1V111h1V112h1V113h1h1V111h1V114h1V110h1V114h1V113h1V112h1V113h1h1V112h1h1h1h1V111h1h1V112h1h1V113h1V112h1V113h1h1V111h1V112h1V113h1h1h1V115h1V112h1V113h1h1V112h1h1V113h1h1V112h1V111h1V113h1V111h1V112h1V111h1h1V113h1V111h1V113h1h1h1V111h1V113h1V111h1V113h1V111h1V112h1V115h1V113h1V112h1V113h1V111h1V109h1V112h1V113h1h1h1V111h1V112h1h1h1V114h1V113h1h1V112h1V113h1V114h1V113h1V110h1V113h1V112h1h1h1V113h1h1V112h1V113h1h1V112h1h1h1V113h1V114h1V112h1V113h1V111h1V114h1V113h1h1h1h1V115h1V113h1h1V116h1V111h1V113h1V112h1V113h1V110h1V109h1V115h1V113h1V112h1V113h1V114h1V112h1V111h1h1V113h1V114h1V113h1V112h1h1V114h1V113h1V112h1V113h1V112h1V113h1V112h1V113h1V110h1h1V114h1V113h1V112h1h1V113h1h1V112h1h1V113h1h1V112h1V113h1h1V114h1V112h1h1h1V113h1V112h1V113h1h1V112h1V111h1V113h1V110h1V113h1V112h1V113h1h1h1h1V112h1V113h1h1V110h1V112h1V113h1h1h1V115h1V114h1V113h1V112h1V113h1h1h1h1h1V111h1V110h1V113h1V112h1V115h1h1V113h1h1V112h1h1V110h1V112h1V113h1h1V112h1h1V113h1V112h1h1V113h1V111h1h1V112h1V111h1h1V113h1h1V112h1V116h1V111h1V113h1V110h1V113h1V114h1V112h1V111h1V113h1V112h1V113h1h1V112h1h1V111h1V112h1V110h1V113h1h1h1V111h1h1V113h1h1h1h1V114h1V112h1h1h1V113h1V112h1V111h1V113h1V111h1V112h1V113h1h1V112h1h1h1h1V111h1V115h1V113h1V110h1V112h1V111h1V110h1V111h1h1V114h1V113h1h1V111h1h1V113h1V115h1V113h1V112h1h1h1V111h1V113h1h1V111h1h1V112h1h1V113h1V115h1V113h1V110h1V115h1V113h1V112h1V111h1h1V112h1V113h1V110h1h1V114h1V112h1V111h1V113h1V115h1V111h1h1V113h1h1V112h1V115h1V112h1V111h1V112h1V113h1V116h1V113h1V111h1V112h1h1V113h1V110h1V113h1V112h1V114h1V113h1h1V111h1V113h1h1V111h1V114h1V112h1h1V113h1h1V111h1V113h1h1V112h1V115h1V113h1V112h1V113h1V112h1V115h1V113h1V111h1V113h1V110h1V112h1h1V111h1V113h1V112h1V113h1h1V111h1h1V113h1V111h1V113h1V112h1h1h1V113h1V114h1V113h1h1V114h1V113h1V111h1V112h1h1V110h1V112h1h1V115h1V113h1h1h1h1h1V112h1V114h1V113h1V112h1V113h1V116h1V113h1V110h1V112h1h1V113h1V112h1V115h1V113h1V112h1h1V110h1V111h1V110h1V111h1h1V113h1h1h1V115h1V113h1h1h1V111h1V114h1V112h1V114h1V115h1V113h1V109h1V113h1h1V112h1V113h1h1V110h1V113h1V110h1V112h1V111h1V113h1V116h1V113h1V110h1V112h1V113h1h1h1h1V114h1V112h1V113h1h1V112h1V113h1V112h1h1h1V113h1h1V112h1V113h1h1V111h1V113h1h1h1h1h1V111h1V112h1V113h1V112h1V114h1V113h1h1h1V112h1V113h1V111h1V114h1V111h1V112h1V113h1V112h1h1h1V110h1V112h1V113h1V110h1V112h1V111h1h1V113h1h1V111h1V112h1V111h1V113h1h1V111h1V116h1V114h1V113h1V110h1V113h1h1h1h1h1V111h1V113h1V110h1V111h1h1V113h1V111h1V112h1V113h1h1V115h1V109h1V111h1V113h1V112h1V113h1V115h1V112h1h1V114h1V111h1V113h1h1V111h1V113h1V112h1V113h1V112h1V115h1V112h1V113h1V110h1V113h1V109h1V112h1V113h1h1V112h1h1V113h1h1h1V112h1V113h1V110h1V113h1h1h1h1h1V115h1V112h1h1V113h1V111h1V113h1V111h1V112h1V113h1V112h1V113h1V114h1V112h1V113h1V114h1V112h1V111h1V114h1V111h1V114h1V113h1h1V114h1V113h1V112h1V113h1h1h1h1V111h1V112h1h1V113h1V112h1V110h1V113h1V110h1V113h1h1h1V110h1V109h1V111h1V113h1V112h1h1V113h1h1V111h1h1V112h1V113h1V115h1V113h1V111h1V114h1V111h1V113h1V112h1h1V113h1V112h1V110h1V114h1V111h1V112h1V115h1V112h1V113h1V114h1V112h1h1h1h1V114h1V113h1h1h1h1h1h1V112h1V113h1h1V125h-1h-1V126h-1h-1V124h-1V126h-1V128h-1V125h-1V126h-1V128h-1V126h-1V125h-1V126h-1V128h-1V127h-1V126h-1V127h-1h-1V129h-1V126h-1h-1V125h-1V127h-1V129h-1V126h-1h-1V125h-1V127h-1V126h-1h-1V127h-1V126h-1h-1V132h-1V126h-1V127h-1h-1V130h-1V126h-1V125h-1V126h-1V130h-1V126h-1h-1h-1h-1h-1V124h-1h-1V127h-1h-1V126h-1h-1V125h-1h-1V128h-1V125h-1V127h-1h-1V126h-1V125h-1V126h-1V127h-1V126h-1V129h-1V125h-1h-1V126h-1V125h-1V124h-1V128h-1V126h-1V127h-1h-1V128h-1V127h-1h-1V125h-1V127h-1h-1V125h-1h-1h-1h-1V127h-1h-1V126h-1V124h-1V128h-1V127h-1h-1V128h-1V126h-1h-1V128h-1V126h-1V128h-1V125h-1V128h-1h-1V129h-1V126h-1V127h-1h-1V125h-1V124h-1V127h-1h-1V126h-1V129h-1V127h-1V126h-1V125h-1V127h-1V125h-1V126h-1V127h-1V129h-1V125h-1V127h-1V129h-1V126h-1V127h-1V126h-1V127h-1V126h-1V124h-1V128h-1V126h-1V124h-1V128h-1V127h-1V126h-1V130h-1V129h-1V126h-1V125h-1V127h-1V126h-1V129h-1V126h-1V125h-1h-1V128h-1V126h-1V128h-1h-1h-1V126h-1h-1h-1V128h-1V125h-1V124h-1V126h-1V127h-1V128h-1V125h-1V130h-1V126h-1V122h-1V126h-1V127h-1V125h-1h-1V126h-1V124h-1V127h-1V126h-1V127h-1V125h-1V128h-1h-1V126h-1V124h-1V127h-1V126h-1V127h-1h-1V121h-1V125h-1V129h-1V125h-1V127h-1V126h-1V125h-1V126h-1V127h-1h-1h-1V125h-1V129h-1V127h-1V126h-1h-1V129h-1V125h-1V126h-1V125h-1V126h-1V125h-1V126h-1h-1V127h-1V125h-1V127h-1V126h-1h-1V129h-1V127h-1h-1V128h-1V127h-1V125h-1h-1V123h-1V125h-1V126h-1V125h-1V126h-1V125h-1h-1h-1V126h-1h-1h-1V125h-1V126h-1h-1V127h-1V126h-1h-1V127h-1h-1V124h-1V128h-1V127h-1h-1V126h-1h-1h-1V124h-1V128h-1V125h-1V127h-1V128h-1V127h-1V126h-1h-1V125h-1h-1V127h-1V126h-1h-1h-1h-1V130h-1V125h-1V124h-1V127h-1V126h-1h-1h-1V125h-1V126h-1V125h-1h-1V126h-1V125h-1V126h-1V123h-1V125h-1V124h-1V127h-1V126h-1V127h-1h-1V124h-1V125h-1h-1V121h-1V127h-1h-1V124h-1V126h-1h-1V127h-1V126h-1V127h-1h-1V128h-1V129h-1V126h-1V125h-1h-1V126h-1V128h-1V125h-1V127h-1V125h-1V126h-1h-1V124h-1V126h-1V127h-1h-1V125h-1V127h-1V125h-1V126h-1h-1V128h-1V127h-1V126h-1V127h-1V126h-1V125h-1V127h-1V126h-1V128h-1V127h-1V128h-1h-1V125h-1V126h-1h-1V125h-1V126h-1h-1V127h-1V125h-1V124h-1V127h-1V126h-1V127h-1V125h-1V126h-1V125h-1V127h-1h-1h-1V125h-1V127h-1V126h-1V125h-1V127h-1V126h-1h-1h-1V129h-1V127h-1V128h-1V126h-1h-1V127h-1V125h-1V127h-1V129h-1V125h-1h-1V126h-1V124h-1V127h-1h-1V125h-1V126h-1V124h-1V126h-1V125h-1V126h-1h-1V125h-1V127h-1h-1V126h-1h-1h-1h-1V127h-1V126h-1V127h-1h-1h-1h-1V125h-1V127h-1V125h-1V126h-1V127h-1h-1h-1V122h-1V126h-1V128h-1V127h-1h-1V126h-1V129h-1V127h-1V122h-1V127h-1V125h-1V126h-1V127h-1h-1V125h-1V126h-1V125h-1h-1V126h-1V125h-1V128h-1V125h-1V127h-1V122h-1V125h-1V126h-1V125h-1V126h-1V127h-1V125h-1V128h-1V126h-1h-1V127h-1V126h-1V129h-1V125h-1V127h-1h-1V126h-1V125h-1V126h-1h-1V128h-1V126h-1V125h-1V128h-1V126h-1V125h-1V127h-1h-1V126h-1V125h-1V126h-1h-1V127h-1V128h-1V121h-1V127h-1V126h-1V127h-1V125h-1h-1V128h-1V129h-1V125h-1h-1V127h-1h-1V125h-1h-1V127h-1h-1V121h-1V129h-1V127h-1V126h-1V127h-1V128h-1V125h-1V127h-1V126h-1V127h-1V125h-1V126h-1V125h-1V126h-1h-1h-1V125h-1V126h-1V124h-1V126h-1h-1V125h-1V126h-1V127h-1V125h-1h-1V127h-1V125h-1V126h-1V127h-1V124h-1V126h-1h-1h-1V130h-1V128h-1V125h-1V128h-1V127h-1V126h-1V125h-1V124h-1V125h-1h-1V127h-1h-1V125h-1V126h-1h-1V127h-1V126h-1V125h-1V127h-1V126h-1V125h-1V126h-1h-1V127h-1V126h-1h-1V127h-1V128h-1V126h-1V124h-1V129h-1V124h-1V127h-1h-1V126h-1V127h-1V125h-1V126h-1h-1V128h-1V126h-1h-1h-1h-1V125h-1V127h-1h-1h-1V126h-1h-1V121h-1V126h-1h-1V125h-1V126h-1V125h-1V128h-1V126h-1V124h-1V126h-1h-1V122h-1V127h-1V126h-1h-1V127h-1h-1V126h-1V127h-1V129h-1V127h-1V125h-1h-1V123h-1V127h-1V126h-1V128h-1V126h-1V127h-1V125h-1V127h-1V126h-1V125h-1V126h-1h-1V125h-1V127h-1V126h-1h-1V128h-1V126h-1h-1h-1V125h-1V127h-1V126h-1V125h-1V126h-1h-1h-1h-1V124h-1h-1V125h-1V123h-1V126h-1h-1V127h-1V126h-1V125h-1V124h-1V126h-1V128h-1V124h-1V126h-1V127h-1h-1V126h-1V127h-1V123h-1V124h-1V130h-1V129h-1V127h-1V129h-1V127h-1V126h-1V125h-1V128h-1V124h-1V126h-1V125h-1h-1h-1V126h-1h-1h-1h-1V127h-1h-1h-1V125h-1V126h-1V125h-1h-1h-1V126h-1h-1V127h-1V125h-1V126h-1h-1V129h-1V127h-1V128h-1V126h-1V129h-1V126h-1h-1h-1h-1h-1h-1V127h-1V126h-1V127h-1V122h-1V126h-1V125h-1h-1V126h-1V125h-1h-1h-1V126h-1V127h-1V126h-1V124h-1V126h-1V127h-1V125h-1V126h-1h-1V128h-1V125h-1h-1V126h-1V125h-1V127h-1V126h-1h-1V127h-1V126h-1h-1V128h-1V125h-1V126h-1V125h-1V126h-1h-1V127h-1V129h-1V123h-1V128h-1V124h-1V126h-1h-1h-1V127h-1V125h-1V126h-1V122h-1V128h-1V126h-1V127h-1V126h-1V129h-1V126h-1h-1h-1V128h-1V126h-1V127h-1V126h-1V127h-1V128h-1V126h-1h-1h-1h-1V125h-1V127h-1V125h-1h-1V126h-1h-1h-1V127h-1V129h-1V126h-1h-1V124h-1V127h-1V126h-1V127h-1V124h-1V125h-1V126h-1V128h-1V125h-1V128h-1V127h-1h-1h-1V122h-1V128h-1V126h-1h-1V127h-1V130h-1V125h-1V127h-1V126h-1V125h-1V128h-1V125h-1h-1V129h-1V126h-1V124h-1V125h-1V126h-1V128h-1V125h-1V128h-1V125h-1V127h-1V128h-1V127h-1V126h-1h-1V123h-1V127h-1V125h-1V127h-1V126h-1V128h-1V126h-1V127h-1V126h-1h-1V124h-1V128h-1h-1h-1V125h-1h-1V128h-1V126h-1V127h-1V125h-1V126h-1V125h-1V126h-1V125h-1V126h-1V125h-1V126h-1V127h-1h-1V126h-1V122h-1V125h-1V127h-1V128h-1V126h-1V127h-1V125h-1h-1V127h-1h-1V125h-1V127h-1V126h-1V128h-1h-1V126h-1h-1V127h-1V125h-1V121h-1V127h-1V126h-1V123h-1V125h-1V126h-1V127h-1V126h-1h-1V125h-1V127h-1V126h-1V131h-1V125h-1V123h-1V127h-1h-1V125h-1V126h-1h-1V125h-1V127h-1V128h-1V127h-1V125h-1V124h-1V126h-1V127h-1V128h-1V125h-1V126h-1V127h-1V126h-1V125h-1h-1V126h-1V125h-1h-1V129h-1h-1V125h-1V126h-1h-1V127h-1h-1V126h-1V127h-1V126h-1V127h-1V128h-1V127h-1V126h-1V127h-1V126h-1V125h-1h-1V126h-1V124h-1V127h-1V128h-1V126h-1V127h-1h-1V126h-1h-1V125h-1h-1V126h-1h-1V125h-1V123h-1V125h-1V126h-1h-1V127h-1V125h-1V126h-1V127h-1h-1V125h-1h-1V126h-1V125h-1V128h-1V126h-1h-1V128h-1V125h-1h-1V126h-1V125h-1V127h-1V126h-1V127h-1h-1V125h-1V127h-1V126h-1V128h-1V127h-1V125h-1V126h-1h-1V125h-1V126h-1h-1h-1V125h-1V128h-1V126h-1V125h-1V126h-1V128h-1V125h-1h-1V127h-1V126h-1h-1h-1h-1V122h-1V127h-1V126h-1h-1h-1h-1h-1h-1V127h-1V129h-1V126h-1V125h-1V123h-1V125h-1V127h-1V128h-1V125h-1V127h-1V128h-1V126h-1V125h-1V126h-1V130h-1V122h-1V126h-1h-1V125h-1V126h-1V125h-1V127h-1V126h-1V122h-1V125h-1V127h-1V126h-1V125h-1V126h-1h-1h-1V125h-1V127h-1V126h-1h-1h-1h-1V127h-1V126h-1h-1V127h-1V126h-1V127h-1h-1V126h-1V125h-1V127h-1h-1V125h-1V128h-1V126h-1V127h-1V125h-1V128h-1V125h-1V126h-1V125h-1V126h-1V125h-1V127h-1V123h-1V127h-1V126h-1V125h-1V127h-1V126h-1h-1h-1V125h-1h-1V126h-1V128h-1V123h-1h-1V126h-1V127h-1V126h-1V127h-1V128h-1V125h-1h-1V127h-1V125h-1V124h-1V126h-1V125h-1V127h-1V126h-1h-1h-1V127h-1V125h-1h-1V126h-1V125h-1V127h-1h-1V126h-1V129h-1V128h-1V125h-1h-1h-1V126h-1h-1V128h-1V127h-1V128h-1V127h-1h-1h-1V124h-1V123h-1V126h-1V128h-1h-1V127h-1V124h-1h-1V125h-1V127h-1V130h-1V127h-1V126h-1V128h-1V126h-1V124h-1V126h-1V124h-1V127h-1V126h-1V128h-1V127h-1V128h-1V126h-1h-1h-1V127h-1h-1V125h-1h-1V124h-1V126h-1h-1V128h-1V126h-1V124h-1V128h-1V126h-1h-1V127h-1V129h-1V127h-1V124h-1V126h-1V127h-1V126h-1h-1V127h-1h-1V126h-1V125h-1V127h-1V125h-1V127h-1h-1h-1V126h-1h-1V125h-1V126h-1V127h-1V125h-1V126h-1V125h-1h-1V127h-1V125h-1V129h-1V127h-1V128h-1V125h-1h-1V128h-1V126h-1V127h-1V128h-1V125h-1V126h-1h-1V125h-1V126h-1h-1V125h-1V126h-1V129h-1V126h-1h-1V124h-1V127h-1V126h-1V127h-1V125h-1V126h-1V122h-1V125h-1V126h-1V124h-1h-1V129h-1V127h-1V125h-1V128h-1V127h-1V126h-1V128h-1V127h-1V128h-1V125h-1V127h-1h-1V129h-1V126h-1h-1h-1V125h-1V126h-1V125h-1V126h-1V125h-1V126h-1V125h-1V127h-1V125h-1V126h-1V127h-1h-1V125h-1V126h-1h-1V124h-1V128h-1V126h-1V128h-1V126h-1V127h-1V125h-1V129h-1V127h-1Z" fill="#ffff00"/>
</g>
<text x="67.5" y="162.2" font-size="13.5" fill="#7a7ad8" font-weight="normal" font-family='"Liberation Mono", monospace' text-anchor="start" textLength="29" lengthAdjust="spacingAndGlyphs" opacity="0.85">84 mV</text>
<rect x="1249" y="107.5" width="17.5" height="12" fill="#000"/>
<text x="1249.5" y="118.6" font-size="14.5" fill="#e6e600" font-weight="normal" font-family='"Liberation Sans", sans-serif' text-anchor="start" textLength="16.5" lengthAdjust="spacingAndGlyphs" >PIK</text>
<rect x="1244" y="140" width="22.5" height="12" fill="#000"/>
<text x="1244.5" y="151" font-size="14.5" fill="#00dd00" font-weight="normal" font-family='"Liberation Sans", sans-serif' text-anchor="start" textLength="21.5" lengthAdjust="spacingAndGlyphs" >PRK</text>
<rect x="1251" y="158.5" width="15.5" height="12" fill="#000"/>
<text x="1251.3" y="169.8" font-size="14.5" fill="#ff8000" font-weight="normal" font-family='"Liberation Sans", sans-serif' text-anchor="start" textLength="15" lengthAdjust="spacingAndGlyphs" >Pis</text>
<rect x="1251" y="700" width="16.5" height="13.5" fill="#000"/>
<text x="1251.7" y="712.5" font-size="14" fill="#9999dd" font-weight="normal" font-family='"Liberation Sans", sans-serif' text-anchor="start" textLength="15.7" lengthAdjust="spacingAndGlyphs" >Pis</text>
<rect x="165" y="106" width="2" height="644.5" fill="#0000ff"/>
<rect x="1270.6" y="106" width="2" height="644" fill="#2a2aff"/><path d="M1271.6,107 V750" stroke="#c8c8ff" stroke-width="0.8" stroke-dasharray="1 4"/>
<path d="M160,106.9 H171 L165.8,116.2 Z" fill="#f0f0f0"/><rect x="160" y="122" width="11" height="1.6" fill="#eee"/><rect x="164.2" y="122" width="2.8" height="11.8" fill="#eee"/>
<path d="M151,748 L165.5,733 L180,748 Z" fill="none" stroke="#909090" stroke-width="2"/>
<rect x="65" y="104.3" width="1207" height="1.7" fill="#a8acb0"/>
<rect x="64.5" y="105" width="1.6" height="646" fill="#a0a0a0"/>
<rect x="65" y="749.5" width="1207" height="1.8" fill="#d0d0dc"/>
<path d="M26.3,109 H55 L64.2,118.35 L55,127.7 H26.3 Z" fill="none" stroke="#8c8800" stroke-width="1.1"/>
<text x="29.7" y="124.8" font-size="17" fill="#a8a400" font-weight="normal" font-family='"Liberation Mono", monospace' text-anchor="start" textLength="13.6" lengthAdjust="spacingAndGlyphs" >C1</text>
<path d="M26.3,141.3 H55 L64.2,150.35000000000002 L55,159.4 H26.3 Z" fill="none" stroke="#0c900c" stroke-width="1.1"/>
<text x="29.7" y="156.5" font-size="17" fill="#12a812" font-weight="normal" font-family='"Liberation Mono", monospace' text-anchor="start" textLength="13.6" lengthAdjust="spacingAndGlyphs" >C2</text>
<path d="M26.3,160.2 H55 L64.2,169.2 L55,178.2 H26.3 Z" fill="none" stroke="#a05810" stroke-width="1.1"/>
<text x="29.7" y="175.3" font-size="17" fill="#b86410" font-weight="normal" font-family='"Liberation Mono", monospace' text-anchor="start" textLength="13.6" lengthAdjust="spacingAndGlyphs" >C3</text>
<path d="M26,702 H55 L64.2,711.4 L55,720.8 H26 Z" fill="#9999ff"/>
<text x="29.7" y="717" font-size="15.5" fill="#000" font-weight="normal" font-family='"Liberation Sans", sans-serif' text-anchor="start" textLength="15.7" lengthAdjust="spacingAndGlyphs" >C4</text>
<path d="M68,711.5 L73.5,707.5 V715.5 Z" fill="#fff"/>
<path d="M78,707 H82.6 V716 H80.2 V708.6 H78 Z" fill="#ff8000"/>
<path d="M77.5,705.2 H83.6 L84.8,706.4 V709.6 L79.6,715.6 H84.8 V717.9 H77.5 V715.4 L82.4,709.6 V707.4 H77.5 Z" fill="#fff"/>
<rect x="26" y="751.3" width="1286" height="38.7" fill="#1b2023"/>
<rect x="668" y="751.3" width="2" height="38.7" fill="#000"/>
<rect x="27.8" y="760" width="24" height="23.5" fill="#00ee00"/>
<text x="30.5" y="779" font-size="16" fill="#003300" font-weight="normal" font-family='"Liberation Sans", sans-serif' text-anchor="start" textLength="18" lengthAdjust="spacingAndGlyphs" >C2</text>
<text x="54" y="781" font-size="22" fill="#f2f2f2" font-weight="normal" font-family='"Liberation Sans", sans-serif' text-anchor="start" textLength="12" lengthAdjust="spacingAndGlyphs" >[ ]</text>
<text x="71" y="779" font-size="22" fill="#f2f2f2" font-weight="normal" font-family='"Liberation Sans", sans-serif' text-anchor="start" textLength="137.6" lengthAdjust="spacingAndGlyphs" >Mean: 108.33 µV</text>
<rect x="349.6" y="759.8" width="24" height="24.2" fill="#9999ff" stroke="#111" stroke-width="0.8"/>
<text x="352.3" y="779" font-size="16" fill="#222244" font-weight="normal" font-family='"Liberation Sans", sans-serif' text-anchor="start" textLength="18" lengthAdjust="spacingAndGlyphs" >C4</text>
<text x="391.4" y="779" font-size="22" fill="#f2f2f2" font-weight="normal" font-family='"Liberation Sans", sans-serif' text-anchor="start" textLength="108.3" lengthAdjust="spacingAndGlyphs" >Vpp: 5.88 mV</text>
<rect x="678" y="760.5" width="23" height="23" fill="#9999ff" stroke="#111" stroke-width="0.8"/>
<text x="680.5" y="778.5" font-size="15" fill="#222244" font-weight="normal" font-family='"Liberation Sans", sans-serif' text-anchor="start" textLength="17.5" lengthAdjust="spacingAndGlyphs" >C4</text>
<text x="707.3" y="777.5" font-size="17.5" fill="#f2f2f2" font-weight="normal" font-family='"Liberation Sans", sans-serif' text-anchor="start" textLength="79" lengthAdjust="spacingAndGlyphs" stroke="#f2f2f2" stroke-width="0.5">t1: -29.902 s</text>
<text x="856.3" y="777.5" font-size="17.5" fill="#f2f2f2" font-weight="normal" font-family='"Liberation Sans", sans-serif' text-anchor="start" textLength="70.3" lengthAdjust="spacingAndGlyphs" stroke="#f2f2f2" stroke-width="0.5">t2: -4.574 s</text>
<text x="1004.8" y="777.5" font-size="17.5" fill="#f2f2f2" font-weight="normal" font-family='"Liberation Sans", sans-serif' text-anchor="start" textLength="76.5" lengthAdjust="spacingAndGlyphs" stroke="#f2f2f2" stroke-width="0.5">Δt: 25.328 s</text>
<text x="1154.8" y="777.5" font-size="17.5" fill="#f2f2f2" font-weight="normal" font-family='"Liberation Sans", sans-serif' text-anchor="start" textLength="118" lengthAdjust="spacingAndGlyphs" stroke="#f2f2f2" stroke-width="0.5">1/Δt: 39.482 mHz</text>
<rect x="26" y="790.5" width="199.6" height="41.5" fill="#2b353c"/>
<rect x="26" y="790.5" width="199.6" height="2" fill="#7a7800"/>
<rect x="26" y="790.5" width="42.6" height="41.5" fill="#7a7800"/>
<rect x="227.3" y="790.5" width="200.7" height="41.5" fill="#2b353c"/>
<rect x="227.3" y="790.5" width="200.7" height="2" fill="#007a00"/>
<rect x="227.3" y="790.5" width="43.6" height="41.5" fill="#007a00"/>
<rect x="429.8" y="790.5" width="199.7" height="41.5" fill="#2b353c"/>
<rect x="429.8" y="790.5" width="199.7" height="2" fill="#7a4000"/>
<rect x="429.8" y="790.5" width="43.2" height="41.5" fill="#7a4000"/>
<rect x="631.7" y="790.5" width="200.0" height="41.5" fill="#2b353c"/>
<rect x="631.7" y="790.5" width="200.0" height="2" fill="#9999ff"/>
<rect x="631.7" y="790.5" width="43.3" height="41.5" fill="#9999ff"/>
<rect x="833.5" y="790.5" width="401" height="41.5" fill="#2b353c"/>
<text x="36.9" y="818.2" font-size="22.5" fill="#000" font-weight="normal" font-family='"Liberation Sans", sans-serif' text-anchor="start" textLength="17.9" lengthAdjust="spacingAndGlyphs" >C1</text>
<text x="239.2" y="818.2" font-size="22.5" fill="#000" font-weight="normal" font-family='"Liberation Sans", sans-serif' text-anchor="start" textLength="18.2" lengthAdjust="spacingAndGlyphs" >C2</text>
<text x="441" y="818.2" font-size="22.5" fill="#000" font-weight="normal" font-family='"Liberation Sans", sans-serif' text-anchor="start" textLength="19.6" lengthAdjust="spacingAndGlyphs" >C3</text>
<text x="643.4" y="818.2" font-size="22.5" fill="#000" font-weight="normal" font-family='"Liberation Sans", sans-serif' text-anchor="start" textLength="20.8" lengthAdjust="spacingAndGlyphs" >C4</text>
<text x="87" y="821.4" font-size="25" fill="#f4f4f4" font-weight="normal" font-family='"Liberation Sans", sans-serif' text-anchor="start" textLength="35" lengthAdjust="spacingAndGlyphs" >100</text>
<text x="127.5" y="821.4" font-size="19" fill="#f4f4f4" font-weight="normal" font-family='"Liberation Sans", sans-serif' text-anchor="start" textLength="29.5" lengthAdjust="spacingAndGlyphs" >mV/</text>
<text x="314" y="821.4" font-size="25" fill="#f4f4f4" font-weight="normal" font-family='"Liberation Sans", sans-serif' text-anchor="start" textLength="9.6" lengthAdjust="spacingAndGlyphs" >5</text>
<text x="329.8" y="821.4" font-size="19" fill="#f4f4f4" font-weight="normal" font-family='"Liberation Sans", sans-serif' text-anchor="start" textLength="28.4" lengthAdjust="spacingAndGlyphs" >mV/</text>
<text x="503.8" y="821.4" font-size="25" fill="#f4f4f4" font-weight="normal" font-family='"Liberation Sans", sans-serif' text-anchor="start" textLength="23.2" lengthAdjust="spacingAndGlyphs" >50</text>
<text x="532" y="821.4" font-size="19" fill="#f4f4f4" font-weight="normal" font-family='"Liberation Sans", sans-serif' text-anchor="start" textLength="29.2" lengthAdjust="spacingAndGlyphs" >mV/</text>
<text x="705.7" y="821.4" font-size="25" fill="#f4f4f4" font-weight="normal" font-family='"Liberation Sans", sans-serif' text-anchor="start" textLength="22.7" lengthAdjust="spacingAndGlyphs" >10</text>
<text x="733.3" y="821.4" font-size="19" fill="#f4f4f4" font-weight="normal" font-family='"Liberation Sans", sans-serif' text-anchor="start" textLength="29.2" lengthAdjust="spacingAndGlyphs" >mV/</text>
<text x="207" y="810" font-size="20" fill="#f0f0f0" font-weight="normal" font-family='"Liberation Sans", sans-serif' text-anchor="start" textLength="15" lengthAdjust="spacingAndGlyphs" >Ω</text>
<text x="210.6" y="829.5" font-size="12" fill="#cfcfcf" font-weight="normal" font-family='"Liberation Sans", sans-serif' text-anchor="start" textLength="13" lengthAdjust="spacingAndGlyphs" >1:1</text>
<text x="410" y="810" font-size="20" fill="#f0f0f0" font-weight="normal" font-family='"Liberation Sans", sans-serif' text-anchor="start" textLength="15" lengthAdjust="spacingAndGlyphs" >Ω</text>
<text x="412.9" y="829.5" font-size="12" fill="#cfcfcf" font-weight="normal" font-family='"Liberation Sans", sans-serif' text-anchor="start" textLength="13" lengthAdjust="spacingAndGlyphs" >1:1</text>
<text x="611.6" y="810" font-size="20" fill="#f0f0f0" font-weight="normal" font-family='"Liberation Sans", sans-serif' text-anchor="start" textLength="15" lengthAdjust="spacingAndGlyphs" >Ω</text>
<text x="614.8" y="829.5" font-size="12" fill="#cfcfcf" font-weight="normal" font-family='"Liberation Sans", sans-serif' text-anchor="start" textLength="13" lengthAdjust="spacingAndGlyphs" >1:1</text>
<text x="814.5" y="810" font-size="20" fill="#f0f0f0" font-weight="normal" font-family='"Liberation Sans", sans-serif' text-anchor="start" textLength="15" lengthAdjust="spacingAndGlyphs" >Ω</text>
<text x="815.5" y="829.5" font-size="12" fill="#cfcfcf" font-weight="normal" font-family='"Liberation Sans", sans-serif' text-anchor="start" textLength="13" lengthAdjust="spacingAndGlyphs" >1:1</text>
<g fill="#ff4a10"><rect x="158.7" y="794" width="15.3" height="2.4"/><path d="M158.7,806.8 L166.35,798 L174,806.8 Z"/><rect x="361" y="794.5" width="15.4" height="2.4"/><path d="M361,806.5 L368.7,798.5 L376.4,806.5 Z"/><path d="M361,816.5 L368.7,824.5 L376.4,816.5 Z"/><rect x="361" y="826.5" width="15.4" height="2.4"/></g>
<path d="M1236,832 V789.5 L1274.8,755.3 L1312,789.5 V832 Z" fill="#2b353c" stroke="#101417" stroke-width="2"/>
<path d="M1274.7,759.6 L1305.7,790.6 L1274.7,821.6 L1243.7,790.6 Z" fill="none" stroke="#ff8a00" stroke-width="2"/>
<path d="M1274.7,767.1 L1298.2,790.6 L1274.7,814.1 L1251.2,790.6 Z" fill="none" stroke="#20a0f8" stroke-width="4.4"/>
<path d="M1283,777.5 C1275,784 1279,794 1262.5,801" fill="none" stroke="#20a0f8" stroke-width="2.6"/>
<text x="1263.6" y="791.1" font-size="15" fill="#20a0f8" font-weight="bold" font-family='"Liberation Sans", sans-serif' text-anchor="start" textLength="9.5" lengthAdjust="spacingAndGlyphs" >R</text>
<text x="1275.7" y="802.6" font-size="15.5" fill="#20a0f8" font-weight="bold" font-family='"Liberation Sans", sans-serif' text-anchor="start" textLength="10" lengthAdjust="spacingAndGlyphs" >S</text>
<text x="1254.9" y="830.1" font-size="16.5" fill="#f4f4f4" font-weight="bold" font-family='"Liberation Sans", sans-serif' text-anchor="start" textLength="38.8" lengthAdjust="spacingAndGlyphs" >Menu</text>
</svg>
</body></html>
